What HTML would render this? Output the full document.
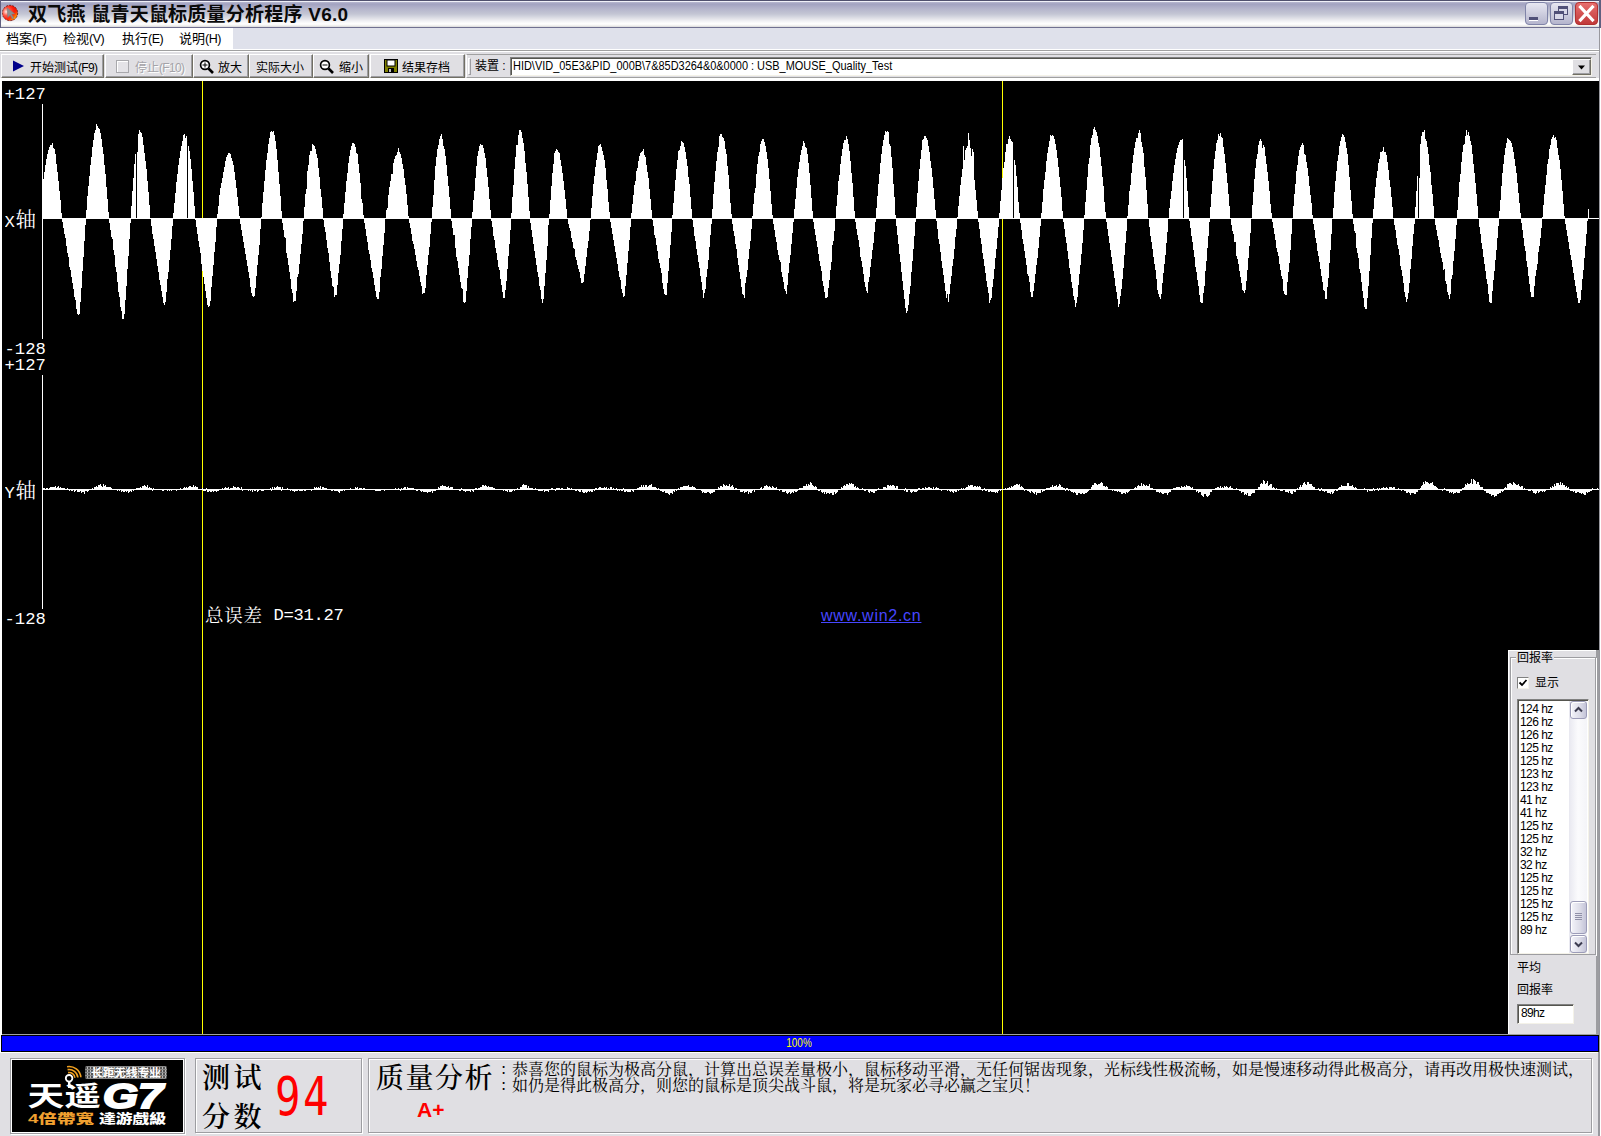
<!DOCTYPE html>
<html lang="zh-CN">
<head>
<meta charset="utf-8">
<title>双飞燕 鼠青天鼠标质量分析程序 V6.0</title>
<style>
*{box-sizing:border-box;margin:0;padding:0}
html,body{width:1601px;height:1136px;overflow:hidden;background:#fff}
body{position:relative;font-family:"Liberation Sans","Noto Sans CJK SC",sans-serif;font-size:12px;color:#000}
.abs{position:absolute}
#titlebar{left:0;top:0;width:1601px;height:28px;
 background:linear-gradient(to bottom,#50506e 0px,#50506e 1px,#f0f0f8 1px,#f0f0f8 2px,#b8b8d0 2px,#a2a2c0 4px,#b2b2ca 8px,#c4c6d4 14px,#d3d5df 16.5px,#e4e4ea 19px,#f6f6f8 22px,#ffffff 24px,#ecebea 26px,#e0e0e0 26.5px,#707090 27px,#707090 28px);}
#title{left:28px;top:2px;height:26px;line-height:26px;font-size:19px;font-weight:bold;white-space:nowrap;letter-spacing:0.23px;color:#0a0a0a}
#menubar{left:0;top:28px;width:1601px;height:21px;background:#dfe1eb}
#menuwhite{left:0;top:28px;width:233px;height:21px;background:#fff}
.menu{top:29px;height:21px;line-height:20px;font-size:13px;white-space:nowrap}
#tbbg{left:0;top:49px;width:1601px;height:32px;background:#e0dfe3}
.hl{left:0;width:1601px;height:1px}
.btn{top:54px;height:24px;background:#e0dfe3;border-top:1px solid #fff;border-left:1px solid #fff;border-right:1px solid #716f64;border-bottom:1px solid #716f64;box-shadow:inset -1px -1px 0 #9d9da1}
.btxt{top:56px;height:24px;line-height:24px;font-size:12px;white-space:nowrap}
#canvas{left:2px;top:81px;width:1597px;height:953px;background:#000;overflow:hidden}
.mono{font-family:"Liberation Mono","Noto Serif CJK SC",monospace;color:#fff;white-space:nowrap}
.lab{font-size:17.2px;line-height:22px;height:22px;overflow:hidden}
.bx{height:20px}
.bx{left:0;width:44px;padding-left:2.5px;background:#000}
.cj{font-family:"Noto Serif CJK SC","Noto Sans CJK SC",serif;font-size:20.5px;line-height:18px;letter-spacing:-1.3px}
#bottom{left:0;top:1053px;width:1601px;height:83px;background:#e0dfe3}
.frame{border:1px solid #9d9da1;box-shadow:inset 1px 1px 0 #fff,1px 1px 0 #fff}
.sbb{border:1px solid #9c9cb8;border-radius:3px;background:linear-gradient(to right,#f4f4fa,#dcdce8 60%,#c4c4d8);box-shadow:inset 1px 1px 0 #fff}
.lt{font-size:12px;letter-spacing:-0.7px}
.ml{font-size:12.5px;letter-spacing:-0.5px}
.song{font-family:"Noto Serif CJK SC","Liberation Serif",serif}
</style>
</head>
<body>
<!-- title bar -->
<div id="titlebar" class="abs"></div>
<svg class="abs" style="left:2px;top:4px" width="18" height="18" viewBox="0 0 18 18">
 <defs><radialGradient id="rb" cx="0.26" cy="0.42" r="0.8"><stop offset="0" stop-color="#fff0ea"/><stop offset="0.3" stop-color="#ff5a48"/><stop offset="0.6" stop-color="#ff1c0c"/><stop offset="1" stop-color="#d81000"/></radialGradient>
 <linearGradient id="yb" x1="0" y1="0" x2="1" y2="1"><stop offset="0.55" stop-color="#ff2000" stop-opacity="0"/><stop offset="0.85" stop-color="#ffb000"/><stop offset="1" stop-color="#ffe000"/></linearGradient></defs>
 <circle cx="8" cy="9" r="7.700" fill="url(#rb)" stroke="#4a1008" stroke-width="0.700" stroke-dasharray="2 1.200"/>
 <circle cx="8" cy="9" r="7.300" fill="url(#yb)"/>
 <path d="M5 3.800l.8 9.700 2.300-2.400 2.200 3.800 1.500-.9-2.200-3.700 3.200-.5z" fill="#8e8e8e" stroke="#787878" stroke-width=".4"/>
</svg>
<div id="title" class="abs">双飞燕 鼠青天鼠标质量分析程序 V6.0</div>
<!-- window buttons -->
<svg class="abs" style="left:1524px;top:1px" width="77" height="26" viewBox="0 0 77 26">
 <defs>
  <linearGradient id="wb" x1="0" y1="0" x2="0" y2="1"><stop offset="0" stop-color="#e8e8f2"/><stop offset="1" stop-color="#b4b4cc"/></linearGradient>
  <linearGradient id="wr" x1="0" y1="0" x2="0" y2="1"><stop offset="0" stop-color="#e87070"/><stop offset="1" stop-color="#c03838"/></linearGradient>
 </defs>
 <rect x="1.500" y="1.500" width="22" height="22" rx="3.500" fill="url(#wb)" stroke="#8084a8"/>
 <rect x="5" y="16" width="9" height="3" fill="#505078"/><rect x="5" y="19" width="9" height="1" fill="#fff"/>
 <rect x="26.500" y="1.500" width="22" height="22" rx="3.500" fill="url(#wb)" stroke="#8084a8"/>
 <rect x="34.500" y="5.500" width="9" height="8" fill="#d8d8e8" stroke="#505078"/><rect x="34" y="5" width="10" height="3" fill="#505078"/>
 <rect x="30.500" y="10.500" width="9" height="8" fill="#d8d8e8" stroke="#505078"/><rect x="30" y="10" width="10" height="3" fill="#505078"/>
 <rect x="51.500" y="1.500" width="22" height="22" rx="3.500" fill="url(#wr)" stroke="#b03030"/>
 <path d="M56.500 6l12 13M68.500 6l-12 13" stroke="#fff" stroke-width="3.200" stroke-linecap="square"/>
</svg>
<!-- menu bar -->
<div id="menubar" class="abs"></div><div id="menuwhite" class="abs"></div>
<div class="abs menu" style="left:6px">档案<span class="ml">(F)</span></div>
<div class="abs menu" style="left:63px">检视<span class="ml">(V)</span></div>
<div class="abs menu" style="left:122px">执行<span class="ml">(E)</span></div>
<div class="abs menu" style="left:179px">说明<span class="ml">(H)</span></div>
<!-- toolbar -->
<div id="tbbg" class="abs"></div>
<div class="abs hl" style="top:49px;background:#fff"></div>
<div class="abs hl" style="top:50px;background:#a0a0a0"></div>
<div class="abs hl" style="top:51px;background:#fff"></div>
<div class="abs hl" style="top:78px;height:3px;background:#fff"></div>
<div class="abs btn" style="left:1px;width:103px"></div>
<div class="abs btn" style="left:105px;width:88px"></div>
<div class="abs btn" style="left:193px;width:56px"></div>
<div class="abs btn" style="left:249px;width:64px"></div>
<div class="abs btn" style="left:313px;width:56px"></div>
<div class="abs btn" style="left:370px;width:95px"></div>
<svg class="abs" style="left:12px;top:59px" width="14" height="14"><path d="M1 1.500L12 7L1 12.500z" fill="#00008b"/></svg>
<div class="abs btxt" style="left:30px">开始测试<span class="lt">(F9)</span></div>
<div class="abs" style="left:116px;top:60px;width:13px;height:13px;border:1px solid #a8a8ac;background:#e4e3e7;box-shadow:inset 1px 1px 0 #fff"></div>
<div class="abs btxt" style="left:135px;color:#a4a3a8;text-shadow:1px 1px 0 #fff">停止<span class="lt">(F10)</span></div>
<svg class="abs" style="left:199px;top:59px" width="16" height="16" viewBox="0 0 16 16"><circle cx="6" cy="6" r="4.400" fill="#fff" stroke="#000" stroke-width="1.700"/><path d="M9.500 9.500L14 14" stroke="#000" stroke-width="2.600"/><path d="M3.500 6h5M6 3.500v5" stroke="#000" stroke-width="1"/></svg>
<div class="abs btxt" style="left:218px">放大</div>
<div class="abs btxt" style="left:256px">实际大小</div>
<svg class="abs" style="left:319px;top:59px" width="16" height="16" viewBox="0 0 16 16"><circle cx="6" cy="6" r="4.400" fill="#fff" stroke="#000" stroke-width="1.700"/><path d="M9.500 9.500L14 14" stroke="#000" stroke-width="2.600"/><path d="M3.500 6h5" stroke="#000" stroke-width="1"/></svg>
<div class="abs btxt" style="left:339px">缩小</div>
<svg class="abs" style="left:384px;top:59px" width="14" height="14" viewBox="0 0 14 14"><rect x="0.500" y="0.500" width="13" height="13" fill="#808000" stroke="#000"/><rect x="3" y="1" width="8" height="6" fill="#fff" stroke="#000" stroke-width="1"/><rect x="4" y="9" width="6" height="4" fill="#000"/><rect x="5" y="10" width="2" height="3" fill="#c0c0c0"/></svg>
<div class="abs btxt" style="left:402px">结果存档</div>
<!-- device band -->
<div class="abs" style="left:466px;top:54px;width:1130px;height:24px;border-top:1px solid #a0a0a0;border-left:1px solid #fff;border-bottom:1px solid #a0a0a0"></div>
<div class="abs" style="left:468px;top:58px;width:3px;height:17px;border-top:1px solid #fff;border-left:1px solid #fff;border-right:1px solid #9d9da1;border-bottom:1px solid #9d9da1"></div>
<div class="abs btxt" style="left:475px;top:54px">装置 :</div>
<div class="abs" style="left:510px;top:57px;width:1082px;height:19px;background:#fff;border-top:1px solid #808080;border-left:1px solid #808080;border-right:1px solid #f4f2e8;border-bottom:1px solid #f4f2e8;box-shadow:inset 1px 1px 0 #55554f"></div>
<div class="abs" id="devtxt" style="left:513px;top:57px;height:19px;line-height:18px;font-size:12.5px;white-space:nowrap;transform-origin:0 0;transform:scaleX(0.876)">HID\VID_05E3&amp;PID_000B\7&amp;85D3264&amp;0&amp;0000 :  USB_MOUSE_Quality_Test</div>
<div class="abs" style="left:1572px;top:59px;width:19px;height:16px;background:#e0dfe3;border-top:1px solid #fff;border-left:1px solid #fff;border-right:1px solid #716f64;border-bottom:1px solid #716f64;box-shadow:inset -1px -1px 0 #9d9da1"></div>
<svg class="abs" style="left:1578px;top:65px" width="8" height="5"><path d="M0 0.500h7L3.500 4.500z" fill="#000"/></svg>
<!-- canvas -->
<div id="canvas" class="abs">
<svg class="abs" style="left:0;top:0" width="1597" height="953" viewBox="0 0 1597 953" shape-rendering="crispEdges">
 <rect x="200" y="0" width="1" height="953" fill="#ffff00"/>
 <rect x="1000" y="0" width="1" height="953" fill="#ffff00"/>
 <rect x="40" y="23" width="1" height="505" fill="#fff"/>
 <rect x="41" y="137" width="1556" height="1" fill="#fff"/>
 <rect x="41" y="408" width="1556" height="1" fill="#fff"/>
 <path fill="#fff" d="M41 98v39h1v-39zM42 91v46h1v-46zM43 84v53h1v-53zM44 78v59h1v-59zM45 73v64h1v-64zM46 69v68h1v-68zM47 66v71h1v-71zM48 64v73h1v-73zM49 64v73h1v-73zM50 62v75h1v-75zM51 67v70h1v-70zM52 68v69h1v-69zM53 73v64h1v-64zM54 83v54h1v-54zM55 91v46h1v-46zM56 100v37h1v-37zM57 110v27h1v-27zM58 119v18h1v-18zM59 132v5h1v-5zM60 137v4h1v-4zM61 137v10h1v-10zM62 137v16h1v-16zM63 137v20h1v-20zM64 137v28h1v-28zM65 137v35h1v-35zM66 137v39h1v-39zM67 137v49h1v-49zM68 137v52h1v-52zM69 137v59h1v-59zM70 137v65h1v-65zM71 137v71h1v-71zM72 137v79h1v-79zM73 137v82h1v-82zM74 137v91h1v-91zM75 137v96h1v-96zM76 137v97h1v-97zM77 137v96h1v-96zM78 137v84h1v-84zM79 137v70h1v-70zM80 137v53h1v-53zM81 137v39h1v-39zM82 137v23h1v-23zM83 137v7h1v-7zM84 129v8h1v-8zM85 115v22h1v-22zM86 105v32h1v-32zM87 95v42h1v-42zM88 84v53h1v-53zM89 76v61h1v-61zM90 66v71h1v-71zM91 59v78h1v-78zM92 52v85h1v-85zM93 49v88h1v-88zM94 43v94h1v-94zM95 45v92h1v-92zM96 47v90h1v-90zM97 48v89h1v-89zM98 52v85h1v-85zM99 58v79h1v-79zM100 66v71h1v-71zM101 73v64h1v-64zM102 84v53h1v-53zM103 93v44h1v-44zM104 106v31h1v-31zM105 118v19h1v-19zM106 131v6h1v-6zM107 137v5h1v-5zM108 137v12h1v-12zM109 137v19h1v-19zM110 137v21h1v-21zM111 137v32h1v-32zM112 137v37h1v-37zM113 137v49h1v-49zM114 137v54h1v-54zM115 137v64h1v-64zM116 137v74h1v-74zM117 137v79h1v-79zM118 137v89h1v-89zM119 137v93h1v-93zM120 137v101h1v-101zM121 137v101h1v-101zM122 137v96h1v-96zM123 137v82h1v-82zM124 137v68h1v-68zM125 137v51h1v-51zM126 137v38h1v-38zM127 137v21h1v-21zM128 137v5h1v-5zM129 125v12h1v-12zM130 110v27h1v-27zM131 97v40h1v-40zM132 83v54h1v-54zM133 73v64h1v-64zM135 71v66h1v-66zM136 53v84h1v-84zM137 49v88h1v-88zM138 51v86h1v-86zM139 52v85h1v-85zM140 56v81h1v-81zM141 64v73h1v-73zM142 72v65h1v-65zM143 80v57h1v-57zM144 88v49h1v-49zM145 100v37h1v-37zM146 111v26h1v-26zM147 124v13h1v-13zM149 137v8h1v-8zM150 137v16h1v-16zM151 137v21h1v-21zM152 137v28h1v-28zM153 137v34h1v-34zM154 137v41h1v-41zM155 137v48h1v-48zM156 137v54h1v-54zM157 137v62h1v-62zM158 137v67h1v-67zM159 137v73h1v-73zM160 137v79h1v-79zM161 137v85h1v-85zM162 137v87h1v-87zM163 137v84h1v-84zM164 137v74h1v-74zM165 137v61h1v-61zM166 137v54h1v-54zM167 137v42h1v-42zM168 137v32h1v-32zM169 137v21h1v-21zM170 137v8h1v-8zM171 132v5h1v-5zM172 122v15h1v-15zM173 112v25h1v-25zM174 101v36h1v-36zM175 93v44h1v-44zM176 84v53h1v-53zM177 77v60h1v-60zM178 70v67h1v-67zM179 65v72h1v-72zM180 60v77h1v-77zM181 54v83h1v-83zM182 53v84h1v-84zM183 57v80h1v-80zM184 55v82h1v-82zM186 65v72h1v-72zM187 70v67h1v-67zM188 78v59h1v-59zM189 88v49h1v-49zM190 100v37h1v-37zM191 111v26h1v-26zM192 125v12h1v-12zM193 137v2h1v-2zM194 137v9h1v-9zM195 137v16h1v-16zM196 137v23h1v-23zM197 137v29h1v-29zM198 137v35h1v-35zM199 137v46h1v-46zM200 137v53h1v-53zM201 137v59h1v-59zM202 137v66h1v-66zM203 137v73h1v-73zM204 137v80h1v-80zM205 137v87h1v-87zM206 137v89h1v-89zM207 137v88h1v-88zM208 137v83h1v-83zM209 137v69h1v-69zM210 137v58h1v-58zM211 137v47h1v-47zM212 137v34h1v-34zM213 137v24h1v-24zM214 137v9h1v-9zM215 133v4h1v-4zM216 125v12h1v-12zM217 114v23h1v-23zM218 107v30h1v-30zM219 102v35h1v-35zM220 97v40h1v-40zM221 91v46h1v-46zM222 86v51h1v-51zM223 80v57h1v-57zM224 76v61h1v-61zM225 74v63h1v-63zM226 72v65h1v-65zM227 72v65h1v-65zM228 73v64h1v-64zM229 77v60h1v-60zM230 80v57h1v-57zM231 84v53h1v-53zM232 91v46h1v-46zM233 99v38h1v-38zM234 107v30h1v-30zM235 116v21h1v-21zM236 125v12h1v-12zM237 135v2h1v-2zM238 137v6h1v-6zM239 137v12h1v-12zM240 137v18h1v-18zM241 137v24h1v-24zM242 137v30h1v-30zM243 137v36h1v-36zM244 137v42h1v-42zM245 137v48h1v-48zM246 137v54h1v-54zM247 137v60h1v-60zM248 137v69h1v-69zM249 137v75h1v-75zM250 137v78h1v-78zM251 137v79h1v-79zM252 137v78h1v-78zM253 137v70h1v-70zM254 137v58h1v-58zM255 137v47h1v-47zM256 137v37h1v-37zM257 137v27h1v-27zM258 137v11h1v-11zM259 136v1h1v-1zM260 122v15h1v-15zM261 111v26h1v-26zM262 100v37h1v-37zM263 89v48h1v-48zM264 79v58h1v-58zM265 72v65h1v-65zM266 63v74h1v-74zM267 57v80h1v-80zM268 51v86h1v-86zM269 50v87h1v-87zM270 51v86h1v-86zM271 50v87h1v-87zM272 54v83h1v-83zM273 60v77h1v-77zM274 68v69h1v-69zM275 79v58h1v-58zM276 91v46h1v-46zM277 103v34h1v-34zM278 115v22h1v-22zM279 130v7h1v-7zM280 137v5h1v-5zM281 137v12h1v-12zM282 137v19h1v-19zM283 137v20h1v-20zM284 137v35h1v-35zM285 137v40h1v-40zM286 137v47h1v-47zM287 137v54h1v-54zM288 137v61h1v-61zM289 137v71h1v-71zM290 137v75h1v-75zM291 137v84h1v-84zM292 137v83h1v-83zM293 137v83h1v-83zM294 137v73h1v-73zM295 137v59h1v-59zM296 137v56h1v-56zM297 137v46h1v-46zM298 137v36h1v-36zM299 137v26h1v-26zM300 137v16h1v-16zM301 137v3h1v-3zM302 126v11h1v-11zM303 113v24h1v-24zM304 108v29h1v-29zM305 90v47h1v-47zM306 84v53h1v-53zM307 74v63h1v-63zM308 70v67h1v-67zM309 70v67h1v-67zM310 63v74h1v-74zM311 64v73h1v-73zM312 65v72h1v-72zM313 68v69h1v-69zM314 73v64h1v-64zM315 77v60h1v-60zM316 87v50h1v-50zM317 96v41h1v-41zM318 108v29h1v-29zM319 116v21h1v-21zM320 127v10h1v-10zM321 137v2h1v-2zM322 137v9h1v-9zM323 137v14h1v-14zM324 137v22h1v-22zM325 137v30h1v-30zM326 137v35h1v-35zM327 137v44h1v-44zM328 137v53h1v-53zM329 137v60h1v-60zM330 137v68h1v-68zM331 137v69h1v-69zM332 137v79h1v-79zM333 137v77h1v-77zM334 137v77h1v-77zM335 137v67h1v-67zM336 137v55h1v-55zM337 137v46h1v-46zM338 137v37h1v-37zM339 137v23h1v-23zM340 137v11h1v-11zM341 133v4h1v-4zM342 122v15h1v-15zM343 111v26h1v-26zM344 100v37h1v-37zM345 92v45h1v-45zM346 82v55h1v-55zM347 75v62h1v-62zM348 69v68h1v-68zM349 65v72h1v-72zM350 62v75h1v-75zM351 62v75h1v-75zM352 63v74h1v-74zM353 66v71h1v-71zM354 72v65h1v-65zM355 73v64h1v-64zM356 83v54h1v-54zM357 92v45h1v-45zM358 102v35h1v-35zM359 118v19h1v-19zM360 122v15h1v-15zM361 134v3h1v-3zM362 137v5h1v-5zM363 137v11h1v-11zM364 137v18h1v-18zM365 137v24h1v-24zM366 137v32h1v-32zM367 137v36h1v-36zM368 137v42h1v-42zM369 137v50h1v-50zM370 137v54h1v-54zM371 137v60h1v-60zM372 137v67h1v-67zM373 137v73h1v-73zM374 137v79h1v-79zM375 137v81h1v-81zM376 137v81h1v-81zM377 137v74h1v-74zM378 137v59h1v-59zM379 137v51h1v-51zM380 137v38h1v-38zM381 137v27h1v-27zM382 137v15h1v-15zM384 129v8h1v-8zM385 127v10h1v-10zM386 114v23h1v-23zM387 106v31h1v-31zM388 100v37h1v-37zM389 93v44h1v-44zM390 93v44h1v-44zM391 82v55h1v-55zM392 78v59h1v-59zM393 75v62h1v-62zM394 74v63h1v-63zM395 71v66h1v-66zM396 67v70h1v-70zM397 71v66h1v-66zM398 73v64h1v-64zM399 77v60h1v-60zM400 83v54h1v-54zM401 88v49h1v-49zM402 97v40h1v-40zM403 104v33h1v-33zM404 113v24h1v-24zM405 124v13h1v-13zM406 135v2h1v-2zM407 137v5h1v-5zM408 137v10h1v-10zM409 137v16h1v-16zM410 137v23h1v-23zM411 137v26h1v-26zM412 137v31h1v-31zM413 137v37h1v-37zM414 137v43h1v-43zM415 137v49h1v-49zM416 137v52h1v-52zM417 137v58h1v-58zM418 137v64h1v-64zM419 137v68h1v-68zM420 137v76h1v-76zM421 137v75h1v-75zM422 137v75h1v-75zM423 137v70h1v-70zM424 137v57h1v-57zM425 137v47h1v-47zM426 137v37h1v-37zM427 137v29h1v-29zM428 137v16h1v-16zM429 137v4h1v-4zM430 126v11h1v-11zM431 114v23h1v-23zM432 99v38h1v-38zM433 85v52h1v-52zM434 76v61h1v-61zM435 68v69h1v-69zM436 64v73h1v-73zM437 58v79h1v-79zM438 55v82h1v-82zM439 53v84h1v-84zM440 58v79h1v-79zM441 65v72h1v-72zM442 68v69h1v-69zM443 75v62h1v-62zM444 84v53h1v-53zM445 95v42h1v-42zM446 105v32h1v-32zM447 116v21h1v-21zM448 128v9h1v-9zM449 137v3h1v-3zM450 137v10h1v-10zM451 137v17h1v-17zM452 137v17h1v-17zM453 137v30h1v-30zM454 137v39h1v-39zM455 137v43h1v-43zM456 137v50h1v-50zM457 137v57h1v-57zM458 137v64h1v-64zM459 137v70h1v-70zM460 137v71h1v-71zM461 137v84h1v-84zM462 137v85h1v-85zM463 137v84h1v-84zM464 137v73h1v-73zM465 137v60h1v-60zM466 137v48h1v-48zM467 137v37h1v-37zM468 137v21h1v-21zM469 137v9h1v-9zM470 131v6h1v-6zM471 119v18h1v-18zM472 110v27h1v-27zM473 97v40h1v-40zM474 85v52h1v-52zM475 75v62h1v-62zM476 70v67h1v-67zM477 65v72h1v-72zM478 63v74h1v-74zM479 64v73h1v-73zM480 64v73h1v-73zM481 67v70h1v-70zM482 72v65h1v-65zM483 77v60h1v-60zM484 87v50h1v-50zM485 96v41h1v-41zM486 106v31h1v-31zM487 118v19h1v-19zM488 129v8h1v-8zM489 137v3h1v-3zM490 137v9h1v-9zM491 137v18h1v-18zM492 137v22h1v-22zM493 137v30h1v-30zM494 137v35h1v-35zM495 137v42h1v-42zM496 137v49h1v-49zM497 137v52h1v-52zM498 137v61h1v-61zM499 137v67h1v-67zM500 137v74h1v-74zM501 137v80h1v-80zM502 137v80h1v-80zM503 137v72h1v-72zM504 137v63h1v-63zM505 137v51h1v-51zM506 137v38h1v-38zM507 137v26h1v-26zM508 137v12h1v-12zM509 132v5h1v-5zM510 116v21h1v-21zM511 104v33h1v-33zM512 88v49h1v-49zM513 76v61h1v-61zM514 64v73h1v-73zM515 64v73h1v-73zM516 54v83h1v-83zM517 49v88h1v-88zM518 49v88h1v-88zM519 51v86h1v-86zM520 57v80h1v-80zM521 62v75h1v-75zM522 70v67h1v-67zM523 82v55h1v-55zM524 91v46h1v-46zM525 103v34h1v-34zM526 116v21h1v-21zM527 130v7h1v-7zM528 137v5h1v-5zM529 137v12h1v-12zM530 137v19h1v-19zM531 137v26h1v-26zM532 137v33h1v-33zM533 137v40h1v-40zM534 137v47h1v-47zM535 137v54h1v-54zM536 137v59h1v-59zM537 137v68h1v-68zM538 137v72h1v-72zM539 137v81h1v-81zM540 137v85h1v-85zM541 137v81h1v-81zM542 137v68h1v-68zM543 137v55h1v-55zM544 137v42h1v-42zM545 137v28h1v-28zM546 137v7h1v-7zM547 133v4h1v-4zM548 119v18h1v-18zM549 105v32h1v-32zM550 92v45h1v-45zM551 83v54h1v-54zM552 72v65h1v-65zM553 70v67h1v-67zM554 68v69h1v-69zM555 69v68h1v-68zM556 71v66h1v-66zM557 72v65h1v-65zM558 79v58h1v-58zM559 85v52h1v-52zM560 92v45h1v-45zM561 100v37h1v-37zM562 109v28h1v-28zM563 118v19h1v-19zM564 128v9h1v-9zM566 137v6h1v-6zM567 137v10h1v-10zM568 137v13h1v-13zM569 137v20h1v-20zM570 137v24h1v-24zM571 137v30h1v-30zM572 137v31h1v-31zM573 137v39h1v-39zM574 137v42h1v-42zM575 137v47h1v-47zM576 137v51h1v-51zM577 137v54h1v-54zM578 137v60h1v-60zM579 137v65h1v-65zM580 137v65h1v-65zM581 137v64h1v-64zM582 137v56h1v-56zM583 137v48h1v-48zM584 137v39h1v-39zM585 137v30h1v-30zM586 137v23h1v-23zM587 137v13h1v-13zM588 137v2h1v-2zM589 127v10h1v-10zM590 115v22h1v-22zM591 103v34h1v-34zM592 95v42h1v-42zM593 86v51h1v-51zM594 79v58h1v-58zM595 72v65h1v-65zM596 65v72h1v-72zM597 64v73h1v-73zM598 63v74h1v-74zM599 66v71h1v-71zM600 70v67h1v-67zM601 74v63h1v-63zM602 79v58h1v-58zM603 87v50h1v-50zM604 99v38h1v-38zM605 108v29h1v-29zM606 121v16h1v-16zM607 131v6h1v-6zM608 137v4h1v-4zM609 137v10h1v-10zM610 137v16h1v-16zM611 137v22h1v-22zM612 137v28h1v-28zM613 137v34h1v-34zM614 137v40h1v-40zM615 137v46h1v-46zM616 137v53h1v-53zM617 137v59h1v-59zM618 137v62h1v-62zM619 137v71h1v-71zM620 137v75h1v-75zM621 137v79h1v-79zM622 137v78h1v-78zM623 137v68h1v-68zM624 137v57h1v-57zM625 137v45h1v-45zM626 137v33h1v-33zM627 137v22h1v-22zM628 137v9h1v-9zM629 132v5h1v-5zM630 123v14h1v-14zM631 114v23h1v-23zM632 104v33h1v-33zM633 100v37h1v-37zM634 90v47h1v-47zM635 87v50h1v-50zM636 80v57h1v-57zM637 75v62h1v-62zM638 72v65h1v-65zM639 71v66h1v-66zM640 70v67h1v-67zM641 68v69h1v-69zM642 74v63h1v-63zM643 76v61h1v-61zM644 84v53h1v-53zM645 91v46h1v-46zM646 97v40h1v-40zM647 108v29h1v-29zM648 118v19h1v-19zM649 129v8h1v-8zM650 137v2h1v-2zM651 137v8h1v-8zM652 137v17h1v-17zM653 137v20h1v-20zM654 137v27h1v-27zM655 137v33h1v-33zM656 137v41h1v-41zM657 137v45h1v-45zM658 137v50h1v-50zM659 137v55h1v-55zM660 137v65h1v-65zM661 137v71h1v-71zM662 137v76h1v-76zM663 137v77h1v-77zM664 137v77h1v-77zM665 137v65h1v-65zM666 137v53h1v-53zM667 137v40h1v-40zM668 137v27h1v-27zM669 137v14h1v-14zM670 134v3h1v-3zM671 122v15h1v-15zM672 110v27h1v-27zM673 99v38h1v-38zM674 88v49h1v-49zM675 79v58h1v-58zM676 70v67h1v-67zM677 69v68h1v-68zM678 65v72h1v-72zM679 60v77h1v-77zM680 61v76h1v-76zM681 62v75h1v-75zM682 66v71h1v-71zM683 71v66h1v-66zM684 78v59h1v-59zM685 85v52h1v-52zM686 96v41h1v-41zM687 103v34h1v-34zM688 116v21h1v-21zM689 128v9h1v-9zM690 137v2h1v-2zM691 137v9h1v-9zM692 137v18h1v-18zM693 137v23h1v-23zM694 137v31h1v-31zM695 137v37h1v-37zM696 137v44h1v-44zM697 137v50h1v-50zM698 137v58h1v-58zM699 137v64h1v-64zM700 137v72h1v-72zM701 137v80h1v-80zM702 137v75h1v-75zM703 137v71h1v-71zM704 137v59h1v-59zM705 137v51h1v-51zM706 137v42h1v-42zM707 137v29h1v-29zM708 137v17h1v-17zM709 137v6h1v-6zM710 128v9h1v-9zM711 113v24h1v-24zM712 101v36h1v-36zM713 90v47h1v-47zM714 80v57h1v-57zM715 71v66h1v-66zM716 66v71h1v-71zM717 55v82h1v-82zM718 53v84h1v-84zM719 53v84h1v-84zM720 56v81h1v-81zM721 57v80h1v-80zM722 60v77h1v-77zM723 68v69h1v-69zM724 73v64h1v-64zM725 85v52h1v-52zM726 94v43h1v-43zM727 108v29h1v-29zM728 122v15h1v-15zM729 133v4h1v-4zM730 137v6h1v-6zM731 137v13h1v-13zM732 137v18h1v-18zM733 137v26h1v-26zM734 137v31h1v-31zM735 137v40h1v-40zM736 137v47h1v-47zM737 137v54h1v-54zM738 137v61h1v-61zM739 137v69h1v-69zM740 137v76h1v-76zM741 137v77h1v-77zM742 137v80h1v-80zM743 137v65h1v-65zM744 137v59h1v-59zM745 137v52h1v-52zM746 137v41h1v-41zM747 137v31h1v-31zM748 137v23h1v-23zM749 137v11h1v-11zM750 135v2h1v-2zM751 123v14h1v-14zM752 112v25h1v-25zM753 107v30h1v-30zM754 93v44h1v-44zM755 83v54h1v-54zM756 75v62h1v-62zM757 71v66h1v-66zM758 63v74h1v-74zM759 60v77h1v-77zM760 58v79h1v-79zM761 58v79h1v-79zM762 61v76h1v-76zM763 65v72h1v-72zM764 71v66h1v-66zM765 78v59h1v-59zM766 87v50h1v-50zM767 98v39h1v-39zM768 110v27h1v-27zM769 123v14h1v-14zM770 134v3h1v-3zM771 137v6h1v-6zM772 137v12h1v-12zM773 137v19h1v-19zM774 137v24h1v-24zM775 137v32h1v-32zM776 137v37h1v-37zM777 137v42h1v-42zM778 137v44h1v-44zM779 137v54h1v-54zM780 137v59h1v-59zM781 137v64h1v-64zM782 137v71h1v-71zM783 137v73h1v-73zM784 137v76h1v-76zM785 137v67h1v-67zM786 137v55h1v-55zM787 137v45h1v-45zM788 137v37h1v-37zM789 137v26h1v-26zM790 137v15h1v-15zM791 137v4h1v-4zM792 128v9h1v-9zM793 118v19h1v-19zM794 107v30h1v-30zM795 96v41h1v-41zM796 88v49h1v-49zM797 81v56h1v-56zM798 74v63h1v-63zM799 69v68h1v-68zM800 65v72h1v-72zM801 60v77h1v-77zM802 62v75h1v-75zM803 66v71h1v-71zM804 67v70h1v-70zM805 73v64h1v-64zM806 82v55h1v-55zM807 92v45h1v-45zM808 104v33h1v-33zM809 117v20h1v-20zM810 130v7h1v-7zM811 137v4h1v-4zM812 137v11h1v-11zM813 137v17h1v-17zM814 137v23h1v-23zM815 137v29h1v-29zM816 137v36h1v-36zM817 137v43h1v-43zM818 137v48h1v-48zM819 137v53h1v-53zM820 137v63h1v-63zM821 137v68h1v-68zM822 137v74h1v-74zM823 137v80h1v-80zM824 137v80h1v-80zM825 137v79h1v-79zM826 137v70h1v-70zM827 137v62h1v-62zM828 137v52h1v-52zM829 137v44h1v-44zM830 137v27h1v-27zM831 137v23h1v-23zM832 137v13h1v-13zM834 125v12h1v-12zM835 114v23h1v-23zM836 100v37h1v-37zM837 94v43h1v-43zM838 83v54h1v-54zM839 75v62h1v-62zM840 68v69h1v-69zM841 62v75h1v-75zM842 59v78h1v-78zM843 59v78h1v-78zM844 55v82h1v-82zM845 58v79h1v-79zM846 63v74h1v-74zM847 70v67h1v-67zM848 80v57h1v-57zM849 92v45h1v-45zM850 102v35h1v-35zM851 116v21h1v-21zM852 130v7h1v-7zM853 137v4h1v-4zM854 137v11h1v-11zM855 137v17h1v-17zM856 137v22h1v-22zM857 137v29h1v-29zM858 137v39h1v-39zM859 137v43h1v-43zM860 137v49h1v-49zM861 137v56h1v-56zM862 137v64h1v-64zM863 137v69h1v-69zM864 137v73h1v-73zM865 137v75h1v-75zM866 137v64h1v-64zM867 137v59h1v-59zM868 137v49h1v-49zM869 137v41h1v-41zM870 137v32h1v-32zM871 137v25h1v-25zM872 137v14h1v-14zM873 137v4h1v-4zM874 127v10h1v-10zM875 115v22h1v-22zM876 103v34h1v-34zM877 93v44h1v-44zM878 82v55h1v-55zM879 73v64h1v-64zM880 65v72h1v-72zM881 59v78h1v-78zM882 54v83h1v-83zM883 50v87h1v-87zM884 51v86h1v-86zM885 50v87h1v-87zM886 51v86h1v-86zM887 63v74h1v-74zM888 65v72h1v-72zM889 76v61h1v-61zM890 87v50h1v-50zM891 103v34h1v-34zM892 116v21h1v-21zM893 134v3h1v-3zM894 137v8h1v-8zM895 137v17h1v-17zM896 137v26h1v-26zM897 137v36h1v-36zM898 137v44h1v-44zM899 137v54h1v-54zM900 137v63h1v-63zM901 137v72h1v-72zM902 137v81h1v-81zM903 137v90h1v-90zM904 137v95h1v-95zM905 137v93h1v-93zM906 137v87h1v-87zM907 137v76h1v-76zM908 137v68h1v-68zM909 137v54h1v-54zM910 137v43h1v-43zM911 137v31h1v-31zM912 137v18h1v-18zM913 137v4h1v-4zM914 126v11h1v-11zM915 112v25h1v-25zM916 100v37h1v-37zM917 88v49h1v-49zM918 78v59h1v-59zM919 69v68h1v-68zM920 59v78h1v-78zM921 58v79h1v-79zM922 55v82h1v-82zM923 55v82h1v-82zM924 57v80h1v-80zM925 59v78h1v-78zM926 65v72h1v-72zM927 71v66h1v-66zM928 80v57h1v-57zM929 87v50h1v-50zM930 96v41h1v-41zM931 107v30h1v-30zM932 118v19h1v-19zM933 129v8h1v-8zM934 137v3h1v-3zM935 137v11h1v-11zM936 137v21h1v-21zM937 137v26h1v-26zM938 137v34h1v-34zM939 137v43h1v-43zM940 137v50h1v-50zM941 137v57h1v-57zM942 137v65h1v-65zM943 137v73h1v-73zM944 137v80h1v-80zM945 137v76h1v-76zM946 137v84h1v-84zM947 137v76h1v-76zM948 137v66h1v-66zM949 137v58h1v-58zM950 137v48h1v-48zM951 137v41h1v-41zM952 137v31h1v-31zM953 137v19h1v-19zM954 137v11h1v-11zM955 136v1h1v-1zM956 125v12h1v-12zM957 115v22h1v-22zM958 104v33h1v-33zM959 96v41h1v-41zM960 88v49h1v-49zM961 65v72h1v-72zM962 79v58h1v-58zM963 69v68h1v-68zM964 67v70h1v-70zM965 65v72h1v-72zM966 52v85h1v-85zM967 59v78h1v-78zM968 67v70h1v-70zM969 75v62h1v-62zM970 68v69h1v-69zM971 71v66h1v-66zM972 99v38h1v-38zM973 109v28h1v-28zM974 119v18h1v-18zM975 130v7h1v-7zM976 137v4h1v-4zM977 137v11h1v-11zM978 137v20h1v-20zM979 137v26h1v-26zM980 137v35h1v-35zM981 137v41h1v-41zM982 137v48h1v-48zM983 137v55h1v-55zM984 137v63h1v-63zM985 137v69h1v-69zM986 137v75h1v-75zM987 137v85h1v-85zM988 137v82h1v-82zM989 137v80h1v-80zM990 137v69h1v-69zM991 137v61h1v-61zM992 137v51h1v-51zM993 137v40h1v-40zM994 137v31h1v-31zM995 137v20h1v-20zM996 137v9h1v-9zM997 132v5h1v-5zM998 120v17h1v-17zM999 109v28h1v-28zM1000 97v40h1v-40zM1001 87v50h1v-50zM1002 81v56h1v-56zM1003 71v66h1v-66zM1004 63v74h1v-74zM1005 63v74h1v-74zM1006 58v79h1v-79zM1007 55v82h1v-82zM1008 58v79h1v-79zM1009 60v77h1v-77zM1010 61v76h1v-76zM1012 79v58h1v-58zM1013 84v53h1v-53zM1014 95v42h1v-42zM1015 106v31h1v-31zM1016 121v16h1v-16zM1017 132v5h1v-5zM1018 137v5h1v-5zM1019 137v12h1v-12zM1020 137v21h1v-21zM1021 137v26h1v-26zM1022 137v33h1v-33zM1023 137v40h1v-40zM1024 137v47h1v-47zM1025 137v56h1v-56zM1026 137v58h1v-58zM1027 137v64h1v-64zM1028 137v74h1v-74zM1029 137v79h1v-79zM1030 137v79h1v-79zM1031 137v73h1v-73zM1032 137v65h1v-65zM1033 137v56h1v-56zM1034 137v47h1v-47zM1035 137v40h1v-40zM1036 137v30h1v-30zM1037 137v19h1v-19zM1038 137v8h1v-8zM1039 132v5h1v-5zM1040 121v16h1v-16zM1041 108v29h1v-29zM1042 99v38h1v-38zM1043 91v46h1v-46zM1044 80v57h1v-57zM1045 72v65h1v-65zM1046 66v71h1v-71zM1047 60v77h1v-77zM1048 54v83h1v-83zM1049 55v82h1v-82zM1050 54v83h1v-83zM1051 55v82h1v-82zM1052 58v79h1v-79zM1053 63v74h1v-74zM1054 69v68h1v-68zM1055 77v60h1v-60zM1056 86v51h1v-51zM1057 96v41h1v-41zM1058 106v31h1v-31zM1059 116v21h1v-21zM1060 130v7h1v-7zM1061 137v4h1v-4zM1062 137v11h1v-11zM1063 137v19h1v-19zM1064 137v25h1v-25zM1065 137v33h1v-33zM1066 137v41h1v-41zM1067 137v50h1v-50zM1068 137v56h1v-56zM1069 137v64h1v-64zM1070 137v70h1v-70zM1071 137v78h1v-78zM1072 137v82h1v-82zM1073 137v89h1v-89zM1074 137v85h1v-85zM1075 137v79h1v-79zM1076 137v67h1v-67zM1077 137v56h1v-56zM1078 137v47h1v-47zM1079 137v36h1v-36zM1080 137v25h1v-25zM1081 137v12h1v-12zM1082 134v3h1v-3zM1083 121v16h1v-16zM1084 109v28h1v-28zM1085 96v41h1v-41zM1086 83v54h1v-54zM1087 77v60h1v-60zM1088 64v73h1v-73zM1089 57v80h1v-80zM1090 54v83h1v-83zM1091 48v89h1v-89zM1092 46v91h1v-91zM1093 49v88h1v-88zM1094 51v86h1v-86zM1095 55v82h1v-82zM1096 62v75h1v-75zM1097 66v71h1v-71zM1098 76v61h1v-61zM1099 85v52h1v-52zM1100 96v41h1v-41zM1101 105v32h1v-32zM1102 121v16h1v-16zM1103 131v6h1v-6zM1104 137v4h1v-4zM1105 137v11h1v-11zM1106 137v18h1v-18zM1107 137v25h1v-25zM1108 137v32h1v-32zM1109 137v39h1v-39zM1110 137v46h1v-46zM1111 137v53h1v-53zM1112 137v60h1v-60zM1113 137v68h1v-68zM1114 137v74h1v-74zM1115 137v81h1v-81zM1116 137v89h1v-89zM1117 137v86h1v-86zM1118 137v78h1v-78zM1119 137v71h1v-71zM1120 137v61h1v-61zM1121 137v50h1v-50zM1122 137v37h1v-37zM1123 137v25h1v-25zM1124 137v13h1v-13zM1125 135v2h1v-2zM1126 124v13h1v-13zM1127 110v27h1v-27zM1128 104v33h1v-33zM1129 92v45h1v-45zM1130 82v55h1v-55zM1131 74v63h1v-63zM1132 67v70h1v-70zM1133 61v76h1v-76zM1134 57v80h1v-80zM1135 57v80h1v-80zM1136 52v85h1v-85zM1137 49v88h1v-88zM1138 52v85h1v-85zM1139 61v76h1v-76zM1140 66v71h1v-71zM1141 72v65h1v-65zM1142 86v51h1v-51zM1143 96v41h1v-41zM1144 109v28h1v-28zM1145 123v14h1v-14zM1147 137v9h1v-9zM1148 137v18h1v-18zM1149 137v24h1v-24zM1150 137v31h1v-31zM1151 137v39h1v-39zM1152 137v46h1v-46zM1153 137v52h1v-52zM1154 137v61h1v-61zM1155 137v72h1v-72zM1156 137v76h1v-76zM1157 137v79h1v-79zM1158 137v81h1v-81zM1159 137v76h1v-76zM1160 137v65h1v-65zM1161 137v55h1v-55zM1162 137v46h1v-46zM1163 137v37h1v-37zM1164 137v25h1v-25zM1165 137v14h1v-14zM1167 127v10h1v-10zM1168 118v19h1v-19zM1169 110v27h1v-27zM1170 100v37h1v-37zM1171 92v45h1v-45zM1172 84v53h1v-53zM1173 78v59h1v-59zM1174 72v65h1v-65zM1175 67v70h1v-70zM1176 64v73h1v-73zM1177 61v76h1v-76zM1178 59v78h1v-78zM1179 59v78h1v-78zM1180 58v79h1v-79zM1182 79v58h1v-58zM1183 85v52h1v-52zM1184 97v40h1v-40zM1185 110v27h1v-27zM1186 126v11h1v-11zM1187 137v3h1v-3zM1188 137v10h1v-10zM1189 137v18h1v-18zM1190 137v24h1v-24zM1191 137v32h1v-32zM1192 137v39h1v-39zM1193 137v49h1v-49zM1194 137v54h1v-54zM1195 137v62h1v-62zM1196 137v68h1v-68zM1197 137v77h1v-77zM1198 137v84h1v-84zM1199 137v85h1v-85zM1200 137v85h1v-85zM1201 137v75h1v-75zM1202 137v68h1v-68zM1203 137v53h1v-53zM1204 137v43h1v-43zM1205 137v30h1v-30zM1206 137v18h1v-18zM1207 137v4h1v-4zM1208 126v11h1v-11zM1209 113v24h1v-24zM1210 100v37h1v-37zM1211 88v49h1v-49zM1212 78v59h1v-59zM1213 70v67h1v-67zM1214 62v75h1v-75zM1215 59v78h1v-78zM1216 53v84h1v-84zM1217 55v82h1v-82zM1218 52v85h1v-85zM1219 56v81h1v-81zM1220 57v80h1v-80zM1221 66v71h1v-71zM1222 73v64h1v-64zM1223 82v55h1v-55zM1224 92v45h1v-45zM1225 102v35h1v-35zM1226 113v24h1v-24zM1227 125v12h1v-12zM1229 137v7h1v-7zM1230 137v13h1v-13zM1231 137v16h1v-16zM1232 137v24h1v-24zM1233 137v24h1v-24zM1234 137v38h1v-38zM1235 137v41h1v-41zM1236 137v46h1v-46zM1237 137v53h1v-53zM1238 137v59h1v-59zM1239 137v65h1v-65zM1240 137v72h1v-72zM1241 137v73h1v-73zM1242 137v75h1v-75zM1243 137v72h1v-72zM1244 137v63h1v-63zM1245 137v52h1v-52zM1246 137v40h1v-40zM1247 137v28h1v-28zM1248 137v15h1v-15zM1250 124v13h1v-13zM1251 111v26h1v-26zM1252 98v39h1v-39zM1253 87v50h1v-50zM1254 78v59h1v-59zM1255 73v64h1v-64zM1256 64v73h1v-73zM1257 60v77h1v-77zM1258 58v79h1v-79zM1259 60v77h1v-77zM1260 67v70h1v-70zM1261 64v73h1v-73zM1262 66v71h1v-71zM1263 75v62h1v-62zM1264 83v54h1v-54zM1265 91v46h1v-46zM1266 100v37h1v-37zM1267 110v27h1v-27zM1268 123v14h1v-14zM1269 132v5h1v-5zM1270 137v4h1v-4zM1271 137v10h1v-10zM1272 137v16h1v-16zM1273 137v22h1v-22zM1274 137v30h1v-30zM1275 137v34h1v-34zM1276 137v38h1v-38zM1277 137v46h1v-46zM1278 137v52h1v-52zM1279 137v58h1v-58zM1280 137v61h1v-61zM1281 137v73h1v-73zM1282 137v76h1v-76zM1283 137v77h1v-77zM1284 137v77h1v-77zM1285 137v64h1v-64zM1286 137v54h1v-54zM1287 137v45h1v-45zM1288 137v32h1v-32zM1289 137v16h1v-16zM1291 125v12h1v-12zM1292 113v24h1v-24zM1293 103v34h1v-34zM1294 90v47h1v-47zM1295 84v53h1v-53zM1296 75v62h1v-62zM1297 69v68h1v-68zM1298 66v71h1v-71zM1299 64v73h1v-73zM1300 62v75h1v-75zM1301 64v73h1v-73zM1302 73v64h1v-64zM1303 74v63h1v-63zM1304 81v56h1v-56zM1305 87v50h1v-50zM1306 95v42h1v-42zM1307 105v32h1v-32zM1308 114v23h1v-23zM1309 122v15h1v-15zM1310 134v3h1v-3zM1311 137v6h1v-6zM1312 137v12h1v-12zM1313 137v20h1v-20zM1314 137v25h1v-25zM1315 137v33h1v-33zM1316 137v38h1v-38zM1317 137v44h1v-44zM1318 137v51h1v-51zM1319 137v58h1v-58zM1320 137v64h1v-64zM1321 137v72h1v-72zM1322 137v73h1v-73zM1323 137v81h1v-81zM1324 137v81h1v-81zM1325 137v69h1v-69zM1326 137v60h1v-60zM1327 137v45h1v-45zM1328 137v32h1v-32zM1329 137v16h1v-16zM1331 127v10h1v-10zM1332 111v26h1v-26zM1333 100v37h1v-37zM1334 90v47h1v-47zM1335 80v57h1v-57zM1336 74v63h1v-63zM1337 65v72h1v-72zM1338 60v77h1v-77zM1339 56v81h1v-81zM1340 53v84h1v-84zM1341 54v83h1v-83zM1342 56v81h1v-81zM1343 61v76h1v-76zM1344 67v70h1v-70zM1345 73v64h1v-64zM1346 84v53h1v-53zM1347 96v41h1v-41zM1348 109v28h1v-28zM1349 120v17h1v-17zM1350 133v4h1v-4zM1351 137v6h1v-6zM1352 137v13h1v-13zM1353 137v15h1v-15zM1354 137v30h1v-30zM1355 137v35h1v-35zM1356 137v40h1v-40zM1357 137v51h1v-51zM1358 137v55h1v-55zM1359 137v64h1v-64zM1360 137v73h1v-73zM1361 137v80h1v-80zM1362 137v89h1v-89zM1363 137v91h1v-91zM1364 137v91h1v-91zM1365 137v80h1v-80zM1366 137v68h1v-68zM1367 137v53h1v-53zM1368 137v37h1v-37zM1369 137v20h1v-20zM1370 137v5h1v-5zM1371 128v9h1v-9zM1372 117v20h1v-20zM1373 106v31h1v-31zM1374 97v40h1v-40zM1375 90v47h1v-47zM1376 82v55h1v-55zM1377 78v59h1v-59zM1378 71v66h1v-66zM1379 71v66h1v-66zM1380 70v67h1v-67zM1381 66v71h1v-71zM1382 71v66h1v-66zM1383 71v66h1v-66zM1384 74v63h1v-63zM1385 81v56h1v-56zM1386 89v48h1v-48zM1387 99v38h1v-38zM1388 106v31h1v-31zM1389 116v21h1v-21zM1390 126v11h1v-11zM1392 137v7h1v-7zM1393 137v12h1v-12zM1394 137v20h1v-20zM1395 137v27h1v-27zM1396 137v31h1v-31zM1397 137v37h1v-37zM1398 137v48h1v-48zM1399 137v52h1v-52zM1400 137v58h1v-58zM1401 137v65h1v-65zM1402 137v74h1v-74zM1403 137v79h1v-79zM1404 137v84h1v-84zM1405 137v81h1v-81zM1406 137v75h1v-75zM1407 137v65h1v-65zM1408 137v51h1v-51zM1409 137v41h1v-41zM1410 137v28h1v-28zM1411 137v16h1v-16zM1412 137v6h1v-6zM1413 126v11h1v-11zM1414 110v27h1v-27zM1415 95v42h1v-42zM1417 97v40h1v-40zM1418 63v74h1v-74zM1419 55v82h1v-82zM1420 51v86h1v-86zM1421 51v86h1v-86zM1422 49v88h1v-88zM1423 58v79h1v-79zM1424 60v77h1v-77zM1425 66v71h1v-71zM1426 73v64h1v-64zM1427 84v53h1v-53zM1428 91v46h1v-46zM1429 104v33h1v-33zM1430 113v24h1v-24zM1431 125v12h1v-12zM1433 137v7h1v-7zM1434 137v12h1v-12zM1435 137v18h1v-18zM1436 137v22h1v-22zM1437 137v29h1v-29zM1438 137v35h1v-35zM1439 137v40h1v-40zM1440 137v44h1v-44zM1441 137v52h1v-52zM1442 137v51h1v-51zM1443 137v63h1v-63zM1444 137v66h1v-66zM1445 137v74h1v-74zM1446 137v77h1v-77zM1447 137v81h1v-81zM1448 137v76h1v-76zM1449 137v61h1v-61zM1450 137v57h1v-57zM1451 137v43h1v-43zM1452 137v33h1v-33zM1453 137v21h1v-21zM1454 137v7h1v-7zM1455 129v8h1v-8zM1456 116v21h1v-21zM1457 101v36h1v-36zM1458 93v44h1v-44zM1459 81v56h1v-56zM1460 71v66h1v-66zM1461 64v73h1v-73zM1462 63v74h1v-74zM1463 55v82h1v-82zM1464 49v88h1v-88zM1465 54v83h1v-83zM1466 51v86h1v-86zM1467 55v82h1v-82zM1468 60v77h1v-77zM1469 64v73h1v-73zM1470 73v64h1v-64zM1471 83v54h1v-54zM1472 92v45h1v-45zM1473 102v35h1v-35zM1474 113v24h1v-24zM1475 125v12h1v-12zM1477 137v9h1v-9zM1478 137v16h1v-16zM1479 137v25h1v-25zM1480 137v31h1v-31zM1481 137v39h1v-39zM1482 137v46h1v-46zM1483 137v53h1v-53zM1484 137v61h1v-61zM1485 137v66h1v-66zM1486 137v76h1v-76zM1487 137v84h1v-84zM1488 137v85h1v-85zM1489 137v85h1v-85zM1490 137v73h1v-73zM1491 137v62h1v-62zM1492 137v53h1v-53zM1493 137v42h1v-42zM1494 137v32h1v-32zM1495 137v20h1v-20zM1496 137v8h1v-8zM1497 130v7h1v-7zM1498 119v18h1v-18zM1499 105v32h1v-32zM1500 92v45h1v-45zM1501 83v54h1v-54zM1502 74v63h1v-63zM1503 67v70h1v-70zM1504 62v75h1v-75zM1505 57v80h1v-80zM1506 58v79h1v-79zM1507 59v78h1v-78zM1508 60v77h1v-77zM1509 62v75h1v-75zM1510 66v71h1v-71zM1511 71v66h1v-66zM1512 78v59h1v-59zM1513 85v52h1v-52zM1514 92v45h1v-45zM1515 102v35h1v-35zM1516 112v25h1v-25zM1517 122v15h1v-15zM1518 132v5h1v-5zM1519 137v5h1v-5zM1520 137v12h1v-12zM1521 137v20h1v-20zM1522 137v28h1v-28zM1523 137v33h1v-33zM1524 137v43h1v-43zM1525 137v49h1v-49zM1526 137v58h1v-58zM1527 137v66h1v-66zM1528 137v74h1v-74zM1529 137v79h1v-79zM1530 137v79h1v-79zM1531 137v79h1v-79zM1532 137v68h1v-68zM1533 137v58h1v-58zM1534 137v52h1v-52zM1535 137v46h1v-46zM1536 137v34h1v-34zM1537 137v28h1v-28zM1538 137v20h1v-20zM1539 137v10h1v-10zM1540 136v1h1v-1zM1541 124v13h1v-13zM1542 113v24h1v-24zM1543 104v33h1v-33zM1544 94v43h1v-43zM1545 83v54h1v-54zM1546 78v59h1v-59zM1547 68v69h1v-69zM1548 64v73h1v-73zM1549 58v79h1v-79zM1550 56v81h1v-81zM1551 54v83h1v-83zM1552 57v80h1v-80zM1553 56v81h1v-81zM1554 59v78h1v-78zM1555 67v70h1v-70zM1556 74v63h1v-63zM1557 79v58h1v-58zM1558 88v49h1v-49zM1559 99v38h1v-38zM1560 110v27h1v-27zM1561 123v14h1v-14zM1562 135v2h1v-2zM1563 137v6h1v-6zM1564 137v12h1v-12zM1565 137v18h1v-18zM1566 137v24h1v-24zM1567 137v31h1v-31zM1568 137v37h1v-37zM1569 137v42h1v-42zM1570 137v49h1v-49zM1571 137v55h1v-55zM1572 137v62h1v-62zM1573 137v68h1v-68zM1574 137v74h1v-74zM1575 137v80h1v-80zM1576 137v85h1v-85zM1577 137v85h1v-85zM1578 137v82h1v-82zM1579 137v72h1v-72zM1580 137v61h1v-61zM1581 137v52h1v-52zM1582 137v40h1v-40zM1583 137v28h1v-28zM1584 137v16h1v-16zM1585 137v3h1v-3zM1586 128v9h1v-9z"/>
 <path fill="#fff" d="M41 407v1h1v-1zM42 407v1h1v-1zM44 407v1h1v-1zM45 407v1h1v-1zM47 407v1h1v-1zM48 406v2h1v-2zM49 406v2h1v-2zM50 406v2h1v-2zM51 406v2h1v-2zM52 406v2h1v-2zM53 405v3h1v-3zM54 407v1h1v-1zM55 406v2h1v-2zM56 405v3h1v-3zM57 407v1h1v-1zM58 406v2h1v-2zM59 407v1h1v-1zM60 407v1h1v-1zM61 407v1h1v-1zM62 407v1h1v-1zM65 407v1h1v-1zM67 408v2h1v-2zM69 408v2h1v-2zM70 408v2h1v-2zM72 408v3h1v-3zM73 408v2h1v-2zM75 408v3h1v-3zM76 408v3h1v-3zM77 408v3h1v-3zM78 408v2h1v-2zM79 408v4h1v-4zM80 408v3h1v-3zM81 408v3h1v-3zM82 408v5h1v-5zM83 408v2h1v-2zM84 408v2h1v-2zM85 408v3h1v-3zM86 408v2h1v-2zM90 407v1h1v-1zM92 406v2h1v-2zM93 406v2h1v-2zM94 405v3h1v-3zM95 406v2h1v-2zM96 404v4h1v-4zM97 404v4h1v-4zM98 403v5h1v-5zM99 405v3h1v-3zM100 406v2h1v-2zM101 403v5h1v-5zM102 405v3h1v-3zM103 404v4h1v-4zM104 406v2h1v-2zM105 406v2h1v-2zM106 406v2h1v-2zM107 406v2h1v-2zM108 406v2h1v-2zM109 407v1h1v-1zM115 408v2h1v-2zM117 408v2h1v-2zM119 408v3h1v-3zM120 408v2h1v-2zM121 408v3h1v-3zM122 408v3h1v-3zM123 408v2h1v-2zM124 408v3h1v-3zM125 408v2h1v-2zM126 408v4h1v-4zM127 408v3h1v-3zM128 408v2h1v-2zM129 408v3h1v-3zM131 408v2h1v-2zM134 407v1h1v-1zM135 407v1h1v-1zM136 407v1h1v-1zM137 407v1h1v-1zM138 406v2h1v-2zM139 407v1h1v-1zM140 405v3h1v-3zM141 405v3h1v-3zM142 404v4h1v-4zM143 405v3h1v-3zM144 406v2h1v-2zM145 404v4h1v-4zM146 407v1h1v-1zM147 406v2h1v-2zM148 407v1h1v-1zM149 407v1h1v-1zM150 408v2h1v-2zM151 407v1h1v-1zM160 408v2h1v-2zM161 408v2h1v-2zM165 408v2h1v-2zM167 408v2h1v-2zM169 408v2h1v-2zM174 408v2h1v-2zM178 407v1h1v-1zM181 407v1h1v-1zM182 406v2h1v-2zM183 407v1h1v-1zM184 406v2h1v-2zM185 407v1h1v-1zM186 406v2h1v-2zM187 405v3h1v-3zM188 405v3h1v-3zM189 406v2h1v-2zM190 406v2h1v-2zM191 404v4h1v-4zM192 406v2h1v-2zM193 405v3h1v-3zM194 406v2h1v-2zM195 406v2h1v-2zM200 407v1h1v-1zM201 408v2h1v-2zM202 408v2h1v-2zM203 408v2h1v-2zM204 407v1h1v-1zM205 408v3h1v-3zM206 408v3h1v-3zM207 408v2h1v-2zM208 408v3h1v-3zM209 408v3h1v-3zM210 408v2h1v-2zM211 408v3h1v-3zM212 408v2h1v-2zM213 408v2h1v-2zM214 408v3h1v-3zM215 408v2h1v-2zM216 408v2h1v-2zM220 407v1h1v-1zM222 407v1h1v-1zM223 406v2h1v-2zM224 407v1h1v-1zM225 407v1h1v-1zM226 406v2h1v-2zM228 407v1h1v-1zM229 407v1h1v-1zM230 407v1h1v-1zM231 405v3h1v-3zM232 406v2h1v-2zM233 406v2h1v-2zM234 407v1h1v-1zM235 406v2h1v-2zM236 406v2h1v-2zM237 407v1h1v-1zM239 406v2h1v-2zM240 408v2h1v-2zM246 408v2h1v-2zM248 408v2h1v-2zM250 408v3h1v-3zM252 408v2h1v-2zM253 408v2h1v-2zM255 408v3h1v-3zM256 408v2h1v-2zM259 408v2h1v-2zM260 408v2h1v-2zM261 408v2h1v-2zM268 407v1h1v-1zM269 408v2h1v-2zM270 406v2h1v-2zM272 406v2h1v-2zM273 407v1h1v-1zM274 406v2h1v-2zM275 405v3h1v-3zM276 406v2h1v-2zM277 406v2h1v-2zM278 406v2h1v-2zM279 408v2h1v-2zM280 406v2h1v-2zM285 407v1h1v-1zM288 408v2h1v-2zM290 408v2h1v-2zM291 408v2h1v-2zM292 408v3h1v-3zM293 408v2h1v-2zM294 408v2h1v-2zM295 408v2h1v-2zM297 408v2h1v-2zM298 408v2h1v-2zM299 408v2h1v-2zM300 408v2h1v-2zM302 408v2h1v-2zM303 408v2h1v-2zM309 408v2h1v-2zM312 406v2h1v-2zM313 407v1h1v-1zM314 406v2h1v-2zM315 407v1h1v-1zM316 406v2h1v-2zM317 407v1h1v-1zM318 405v3h1v-3zM320 406v2h1v-2zM321 406v2h1v-2zM322 407v1h1v-1zM323 407v1h1v-1zM324 407v1h1v-1zM329 408v2h1v-2zM330 408v2h1v-2zM332 408v2h1v-2zM333 408v2h1v-2zM334 408v2h1v-2zM335 408v2h1v-2zM336 408v3h1v-3zM337 408v4h1v-4zM338 408v2h1v-2zM339 408v2h1v-2zM340 408v2h1v-2zM342 408v2h1v-2zM348 407v1h1v-1zM353 406v2h1v-2zM354 407v1h1v-1zM355 406v2h1v-2zM357 407v1h1v-1zM358 407v1h1v-1zM359 407v1h1v-1zM361 407v1h1v-1zM362 407v1h1v-1zM373 408v2h1v-2zM374 408v2h1v-2zM375 408v2h1v-2zM376 408v2h1v-2zM377 408v2h1v-2zM378 408v2h1v-2zM382 408v2h1v-2zM393 407v1h1v-1zM396 407v1h1v-1zM398 408v2h1v-2zM399 407v1h1v-1zM401 407v1h1v-1zM402 406v2h1v-2zM403 406v2h1v-2zM405 406v2h1v-2zM406 407v1h1v-1zM407 407v1h1v-1zM408 407v1h1v-1zM409 407v1h1v-1zM410 407v1h1v-1zM411 407v1h1v-1zM414 408v2h1v-2zM415 408v2h1v-2zM418 408v2h1v-2zM419 408v3h1v-3zM420 408v2h1v-2zM421 408v3h1v-3zM422 408v3h1v-3zM423 408v3h1v-3zM424 408v3h1v-3zM425 408v4h1v-4zM426 408v3h1v-3zM427 408v3h1v-3zM428 408v3h1v-3zM429 408v2h1v-2zM430 408v4h1v-4zM431 408v2h1v-2zM432 408v2h1v-2zM433 408v2h1v-2zM436 406v2h1v-2zM437 407v1h1v-1zM438 405v3h1v-3zM439 405v3h1v-3zM440 404v4h1v-4zM441 405v3h1v-3zM442 405v3h1v-3zM443 405v3h1v-3zM444 406v2h1v-2zM445 406v2h1v-2zM446 405v3h1v-3zM447 407v1h1v-1zM448 406v2h1v-2zM449 406v2h1v-2zM450 406v2h1v-2zM457 408v2h1v-2zM458 408v2h1v-2zM459 407v1h1v-1zM461 408v2h1v-2zM462 408v2h1v-2zM463 408v3h1v-3zM464 408v2h1v-2zM465 408v2h1v-2zM466 408v2h1v-2zM467 408v2h1v-2zM468 408v3h1v-3zM470 408v2h1v-2zM471 408v3h1v-3zM473 407v1h1v-1zM474 407v1h1v-1zM476 407v1h1v-1zM477 407v1h1v-1zM478 406v2h1v-2zM479 406v2h1v-2zM480 404v4h1v-4zM481 404v4h1v-4zM482 405v3h1v-3zM483 404v4h1v-4zM484 405v3h1v-3zM485 406v2h1v-2zM486 405v3h1v-3zM487 406v2h1v-2zM488 406v2h1v-2zM489 406v2h1v-2zM490 406v2h1v-2zM491 407v1h1v-1zM492 407v1h1v-1zM501 408v2h1v-2zM503 408v2h1v-2zM504 408v2h1v-2zM505 408v3h1v-3zM507 408v3h1v-3zM508 408v3h1v-3zM509 408v3h1v-3zM510 408v2h1v-2zM512 408v2h1v-2zM515 407v1h1v-1zM518 406v2h1v-2zM519 406v2h1v-2zM520 404v4h1v-4zM521 403v5h1v-5zM522 404v4h1v-4zM523 404v4h1v-4zM524 404v4h1v-4zM525 407v1h1v-1zM526 405v3h1v-3zM527 407v1h1v-1zM528 407v1h1v-1zM529 407v1h1v-1zM530 407v1h1v-1zM533 407v1h1v-1zM536 408v2h1v-2zM537 408v2h1v-2zM538 408v2h1v-2zM539 408v2h1v-2zM540 408v2h1v-2zM542 408v3h1v-3zM543 408v2h1v-2zM544 408v2h1v-2zM545 408v2h1v-2zM546 408v3h1v-3zM549 407v1h1v-1zM550 407v1h1v-1zM553 408v2h1v-2zM554 407v1h1v-1zM555 407v1h1v-1zM556 407v1h1v-1zM557 407v1h1v-1zM559 407v1h1v-1zM560 407v1h1v-1zM565 406v2h1v-2zM566 407v1h1v-1zM567 407v1h1v-1zM569 407v1h1v-1zM573 408v2h1v-2zM574 408v2h1v-2zM576 408v2h1v-2zM577 408v3h1v-3zM578 408v3h1v-3zM580 408v3h1v-3zM581 408v4h1v-4zM582 408v4h1v-4zM583 408v3h1v-3zM584 408v4h1v-4zM585 408v3h1v-3zM586 408v2h1v-2zM587 408v3h1v-3zM588 408v2h1v-2zM589 408v3h1v-3zM590 408v3h1v-3zM592 408v2h1v-2zM593 407v1h1v-1zM594 407v1h1v-1zM596 407v1h1v-1zM597 406v2h1v-2zM598 406v2h1v-2zM599 407v1h1v-1zM600 407v1h1v-1zM601 407v1h1v-1zM602 406v2h1v-2zM603 407v1h1v-1zM604 406v2h1v-2zM606 407v1h1v-1zM608 406v2h1v-2zM609 406v2h1v-2zM611 407v1h1v-1zM614 407v1h1v-1zM615 408v2h1v-2zM617 408v2h1v-2zM619 408v2h1v-2zM620 408v2h1v-2zM621 407v1h1v-1zM622 408v3h1v-3zM623 408v3h1v-3zM624 408v2h1v-2zM625 408v3h1v-3zM626 408v3h1v-3zM627 408v3h1v-3zM628 408v3h1v-3zM630 408v2h1v-2zM631 408v3h1v-3zM635 407v1h1v-1zM636 407v1h1v-1zM637 406v2h1v-2zM638 406v2h1v-2zM639 404v4h1v-4zM640 406v2h1v-2zM641 404v4h1v-4zM642 406v2h1v-2zM643 404v4h1v-4zM644 404v4h1v-4zM645 406v2h1v-2zM646 405v3h1v-3zM647 404v4h1v-4zM648 404v4h1v-4zM649 403v5h1v-5zM650 406v2h1v-2zM651 406v2h1v-2zM652 406v2h1v-2zM653 406v2h1v-2zM654 407v1h1v-1zM656 407v1h1v-1zM658 408v2h1v-2zM659 408v2h1v-2zM660 408v3h1v-3zM661 408v3h1v-3zM662 408v2h1v-2zM663 408v4h1v-4zM664 408v4h1v-4zM665 408v4h1v-4zM666 408v5h1v-5zM667 408v6h1v-6zM668 408v4h1v-4zM669 408v4h1v-4zM670 408v5h1v-5zM671 408v2h1v-2zM672 408v3h1v-3zM674 408v2h1v-2zM676 407v1h1v-1zM678 406v2h1v-2zM679 406v2h1v-2zM680 406v2h1v-2zM681 405v3h1v-3zM682 405v3h1v-3zM683 405v3h1v-3zM684 405v3h1v-3zM685 405v3h1v-3zM686 404v4h1v-4zM687 406v2h1v-2zM688 406v2h1v-2zM689 406v2h1v-2zM690 405v3h1v-3zM691 406v2h1v-2zM692 406v2h1v-2zM693 407v1h1v-1zM699 408v2h1v-2zM700 408v4h1v-4zM701 408v3h1v-3zM702 408v4h1v-4zM703 408v4h1v-4zM704 408v4h1v-4zM705 408v3h1v-3zM706 408v3h1v-3zM707 408v4h1v-4zM708 408v5h1v-5zM709 408v4h1v-4zM710 408v4h1v-4zM711 408v3h1v-3zM712 408v3h1v-3zM716 406v2h1v-2zM717 407v1h1v-1zM718 405v3h1v-3zM719 405v3h1v-3zM720 406v2h1v-2zM721 403v5h1v-5zM722 404v4h1v-4zM723 405v3h1v-3zM724 404v4h1v-4zM725 405v3h1v-3zM726 405v3h1v-3zM727 403v5h1v-5zM728 406v2h1v-2zM729 405v3h1v-3zM730 404v4h1v-4zM731 406v2h1v-2zM733 407v1h1v-1zM734 407v1h1v-1zM738 408v3h1v-3zM739 408v3h1v-3zM740 408v3h1v-3zM741 408v2h1v-2zM742 408v4h1v-4zM743 408v3h1v-3zM744 408v3h1v-3zM745 408v2h1v-2zM746 408v5h1v-5zM747 408v3h1v-3zM748 408v4h1v-4zM749 408v4h1v-4zM750 408v2h1v-2zM752 408v3h1v-3zM758 407v1h1v-1zM759 406v2h1v-2zM761 407v1h1v-1zM762 405v3h1v-3zM763 405v3h1v-3zM764 404v4h1v-4zM765 405v3h1v-3zM766 406v2h1v-2zM767 405v3h1v-3zM768 406v2h1v-2zM769 407v1h1v-1zM770 405v3h1v-3zM771 406v2h1v-2zM772 407v1h1v-1zM773 407v1h1v-1zM774 406v2h1v-2zM777 408v2h1v-2zM780 408v3h1v-3zM781 408v3h1v-3zM782 408v3h1v-3zM783 408v2h1v-2zM784 408v4h1v-4zM785 408v5h1v-5zM786 408v4h1v-4zM787 408v3h1v-3zM788 408v5h1v-5zM789 408v4h1v-4zM790 408v3h1v-3zM791 408v4h1v-4zM792 408v2h1v-2zM793 408v3h1v-3zM794 408v3h1v-3zM795 408v2h1v-2zM797 407v1h1v-1zM798 407v1h1v-1zM799 407v1h1v-1zM800 407v1h1v-1zM801 405v3h1v-3zM802 405v3h1v-3zM803 405v3h1v-3zM804 403v5h1v-5zM805 405v3h1v-3zM806 403v5h1v-5zM807 404v4h1v-4zM808 401v7h1v-7zM809 402v6h1v-6zM810 404v4h1v-4zM811 405v3h1v-3zM812 406v2h1v-2zM813 405v3h1v-3zM814 406v2h1v-2zM816 408v2h1v-2zM817 408v2h1v-2zM819 408v3h1v-3zM820 408v4h1v-4zM821 408v3h1v-3zM822 408v5h1v-5zM823 408v3h1v-3zM824 408v5h1v-5zM825 408v4h1v-4zM826 408v4h1v-4zM827 408v5h1v-5zM828 408v4h1v-4zM829 408v4h1v-4zM830 408v6h1v-6zM831 408v6h1v-6zM832 408v3h1v-3zM833 408v5h1v-5zM834 408v4h1v-4zM835 408v3h1v-3zM839 406v2h1v-2zM840 407v1h1v-1zM841 405v3h1v-3zM842 404v4h1v-4zM843 405v3h1v-3zM844 403v5h1v-5zM845 403v5h1v-5zM846 404v4h1v-4zM847 402v6h1v-6zM848 403v5h1v-5zM849 402v6h1v-6zM850 403v5h1v-5zM851 403v5h1v-5zM852 406v2h1v-2zM853 405v3h1v-3zM854 407v1h1v-1zM855 406v2h1v-2zM856 407v1h1v-1zM860 407v1h1v-1zM862 408v2h1v-2zM863 408v2h1v-2zM866 408v3h1v-3zM867 408v4h1v-4zM868 408v2h1v-2zM869 408v3h1v-3zM870 408v3h1v-3zM871 408v4h1v-4zM872 408v4h1v-4zM873 408v2h1v-2zM874 408v2h1v-2zM876 407v1h1v-1zM881 406v2h1v-2zM882 406v2h1v-2zM883 406v2h1v-2zM884 407v1h1v-1zM885 404v4h1v-4zM886 404v4h1v-4zM887 405v3h1v-3zM888 404v4h1v-4zM889 405v3h1v-3zM890 404v4h1v-4zM891 404v4h1v-4zM892 405v3h1v-3zM893 407v1h1v-1zM894 405v3h1v-3zM895 405v3h1v-3zM902 408v2h1v-2zM903 407v1h1v-1zM904 408v3h1v-3zM905 408v3h1v-3zM908 408v3h1v-3zM909 408v4h1v-4zM910 408v3h1v-3zM911 408v2h1v-2zM912 408v3h1v-3zM913 408v3h1v-3zM914 408v3h1v-3zM915 408v2h1v-2zM916 407v1h1v-1zM917 407v1h1v-1zM920 407v1h1v-1zM921 407v1h1v-1zM923 406v2h1v-2zM924 407v1h1v-1zM925 407v1h1v-1zM926 406v2h1v-2zM927 406v2h1v-2zM928 407v1h1v-1zM929 407v1h1v-1zM931 406v2h1v-2zM933 407v1h1v-1zM934 406v2h1v-2zM935 407v1h1v-1zM936 407v1h1v-1zM939 408v2h1v-2zM945 408v2h1v-2zM947 408v2h1v-2zM948 408v3h1v-3zM949 408v2h1v-2zM950 408v3h1v-3zM951 408v4h1v-4zM952 408v2h1v-2zM953 408v3h1v-3zM954 408v3h1v-3zM956 408v2h1v-2zM959 407v1h1v-1zM961 407v1h1v-1zM963 407v1h1v-1zM964 406v2h1v-2zM965 406v2h1v-2zM966 404v4h1v-4zM967 405v3h1v-3zM968 404v4h1v-4zM969 404v4h1v-4zM970 404v4h1v-4zM971 406v2h1v-2zM972 405v3h1v-3zM973 405v3h1v-3zM974 406v2h1v-2zM975 405v3h1v-3zM976 406v2h1v-2zM977 405v3h1v-3zM978 406v2h1v-2zM980 408v2h1v-2zM982 407v1h1v-1zM983 408v2h1v-2zM984 408v2h1v-2zM986 408v3h1v-3zM987 408v3h1v-3zM988 408v2h1v-2zM989 408v3h1v-3zM990 408v3h1v-3zM991 408v3h1v-3zM992 408v3h1v-3zM993 408v4h1v-4zM994 408v3h1v-3zM995 408v4h1v-4zM996 408v2h1v-2zM998 408v2h1v-2zM1003 407v1h1v-1zM1005 407v1h1v-1zM1006 407v1h1v-1zM1007 406v2h1v-2zM1008 407v1h1v-1zM1009 405v3h1v-3zM1010 406v2h1v-2zM1011 405v3h1v-3zM1012 404v4h1v-4zM1013 404v4h1v-4zM1014 403v5h1v-5zM1015 403v5h1v-5zM1016 404v4h1v-4zM1017 403v5h1v-5zM1018 406v2h1v-2zM1019 405v3h1v-3zM1020 406v2h1v-2zM1021 407v1h1v-1zM1022 408v2h1v-2zM1025 408v2h1v-2zM1026 408v2h1v-2zM1027 408v3h1v-3zM1028 408v4h1v-4zM1029 408v2h1v-2zM1030 408v3h1v-3zM1031 408v4h1v-4zM1032 408v5h1v-5zM1033 408v3h1v-3zM1034 408v6h1v-6zM1035 408v4h1v-4zM1036 408v4h1v-4zM1037 408v4h1v-4zM1038 408v4h1v-4zM1040 408v3h1v-3zM1041 408v2h1v-2zM1042 408v2h1v-2zM1044 407v1h1v-1zM1045 407v1h1v-1zM1046 407v1h1v-1zM1047 407v1h1v-1zM1048 406v2h1v-2zM1049 406v2h1v-2zM1050 404v4h1v-4zM1051 406v2h1v-2zM1052 405v3h1v-3zM1053 405v3h1v-3zM1054 404v4h1v-4zM1055 406v2h1v-2zM1056 405v3h1v-3zM1057 403v5h1v-5zM1058 404v4h1v-4zM1059 406v2h1v-2zM1060 406v2h1v-2zM1061 407v1h1v-1zM1062 407v1h1v-1zM1063 408v2h1v-2zM1064 407v1h1v-1zM1065 407v1h1v-1zM1066 408v2h1v-2zM1068 408v2h1v-2zM1069 408v3h1v-3zM1070 408v3h1v-3zM1071 408v4h1v-4zM1072 408v3h1v-3zM1073 408v4h1v-4zM1074 408v6h1v-6zM1075 408v6h1v-6zM1076 408v4h1v-4zM1077 408v4h1v-4zM1078 408v5h1v-5zM1079 408v5h1v-5zM1080 408v4h1v-4zM1081 408v5h1v-5zM1082 408v5h1v-5zM1083 408v4h1v-4zM1084 408v4h1v-4zM1085 408v3h1v-3zM1086 408v2h1v-2zM1089 406v2h1v-2zM1090 404v4h1v-4zM1091 404v4h1v-4zM1092 402v6h1v-6zM1093 402v6h1v-6zM1094 403v5h1v-5zM1095 404v4h1v-4zM1096 403v5h1v-5zM1097 403v5h1v-5zM1098 402v6h1v-6zM1099 401v7h1v-7zM1100 402v6h1v-6zM1101 405v3h1v-3zM1102 405v3h1v-3zM1103 406v2h1v-2zM1104 405v3h1v-3zM1105 406v2h1v-2zM1110 408v2h1v-2zM1112 408v2h1v-2zM1113 408v2h1v-2zM1114 408v2h1v-2zM1115 408v3h1v-3zM1116 408v2h1v-2zM1117 408v3h1v-3zM1118 408v3h1v-3zM1119 408v5h1v-5zM1120 408v5h1v-5zM1121 408v4h1v-4zM1122 408v4h1v-4zM1123 408v5h1v-5zM1124 408v3h1v-3zM1125 408v4h1v-4zM1126 408v3h1v-3zM1127 408v2h1v-2zM1132 407v1h1v-1zM1133 406v2h1v-2zM1134 407v1h1v-1zM1135 405v3h1v-3zM1136 404v4h1v-4zM1137 405v3h1v-3zM1138 405v3h1v-3zM1139 402v6h1v-6zM1140 405v3h1v-3zM1141 403v5h1v-5zM1142 404v4h1v-4zM1143 405v3h1v-3zM1144 404v4h1v-4zM1145 405v3h1v-3zM1146 405v3h1v-3zM1147 403v5h1v-5zM1148 407v1h1v-1zM1149 407v1h1v-1zM1150 407v1h1v-1zM1154 408v3h1v-3zM1155 408v3h1v-3zM1156 408v3h1v-3zM1157 408v4h1v-4zM1158 408v3h1v-3zM1159 408v4h1v-4zM1160 408v5h1v-5zM1161 408v5h1v-5zM1162 408v4h1v-4zM1163 408v4h1v-4zM1164 408v4h1v-4zM1165 408v6h1v-6zM1166 408v4h1v-4zM1167 408v3h1v-3zM1168 408v3h1v-3zM1171 407v1h1v-1zM1172 407v1h1v-1zM1173 407v1h1v-1zM1174 406v2h1v-2zM1175 406v2h1v-2zM1176 406v2h1v-2zM1177 406v2h1v-2zM1178 407v1h1v-1zM1179 405v3h1v-3zM1180 406v2h1v-2zM1181 406v2h1v-2zM1182 405v3h1v-3zM1183 406v2h1v-2zM1184 404v4h1v-4zM1185 405v3h1v-3zM1186 405v3h1v-3zM1187 405v3h1v-3zM1188 406v2h1v-2zM1189 407v1h1v-1zM1190 406v2h1v-2zM1194 408v3h1v-3zM1195 408v2h1v-2zM1196 408v4h1v-4zM1197 408v3h1v-3zM1198 408v3h1v-3zM1199 408v6h1v-6zM1200 408v7h1v-7zM1201 408v8h1v-8zM1202 408v5h1v-5zM1203 408v5h1v-5zM1204 408v7h1v-7zM1205 408v8h1v-8zM1206 408v7h1v-7zM1207 408v6h1v-6zM1208 408v3h1v-3zM1209 408v3h1v-3zM1213 407v1h1v-1zM1214 407v1h1v-1zM1215 406v2h1v-2zM1216 406v2h1v-2zM1217 407v1h1v-1zM1218 405v3h1v-3zM1219 407v1h1v-1zM1220 406v2h1v-2zM1221 407v1h1v-1zM1222 405v3h1v-3zM1223 406v2h1v-2zM1224 405v3h1v-3zM1225 406v2h1v-2zM1226 407v1h1v-1zM1227 406v2h1v-2zM1228 405v3h1v-3zM1229 407v1h1v-1zM1230 407v1h1v-1zM1234 407v1h1v-1zM1237 408v2h1v-2zM1238 408v2h1v-2zM1239 408v4h1v-4zM1240 408v3h1v-3zM1241 408v3h1v-3zM1242 408v6h1v-6zM1243 408v5h1v-5zM1244 408v6h1v-6zM1245 408v4h1v-4zM1246 408v7h1v-7zM1247 408v7h1v-7zM1248 408v7h1v-7zM1249 408v5h1v-5zM1250 408v4h1v-4zM1251 408v4h1v-4zM1252 408v4h1v-4zM1256 406v2h1v-2zM1257 406v2h1v-2zM1258 403v5h1v-5zM1259 402v6h1v-6zM1260 403v5h1v-5zM1261 399v9h1v-9zM1262 400v8h1v-8zM1263 403v5h1v-5zM1264 402v6h1v-6zM1265 400v8h1v-8zM1266 405v3h1v-3zM1267 404v4h1v-4zM1268 403v5h1v-5zM1269 403v5h1v-5zM1270 407v1h1v-1zM1271 406v2h1v-2zM1272 407v1h1v-1zM1274 407v1h1v-1zM1278 408v2h1v-2zM1279 408v2h1v-2zM1280 408v2h1v-2zM1283 408v3h1v-3zM1284 408v3h1v-3zM1285 408v3h1v-3zM1286 408v4h1v-4zM1287 408v2h1v-2zM1288 408v4h1v-4zM1289 408v5h1v-5zM1290 408v5h1v-5zM1291 408v2h1v-2zM1292 408v3h1v-3zM1293 408v3h1v-3zM1295 407v1h1v-1zM1297 406v2h1v-2zM1298 404v4h1v-4zM1299 406v2h1v-2zM1300 404v4h1v-4zM1301 402v6h1v-6zM1302 401v7h1v-7zM1303 403v5h1v-5zM1304 404v4h1v-4zM1305 401v7h1v-7zM1306 401v7h1v-7zM1307 403v5h1v-5zM1308 403v5h1v-5zM1309 403v5h1v-5zM1310 405v3h1v-3zM1311 406v2h1v-2zM1312 406v2h1v-2zM1316 407v1h1v-1zM1317 408v2h1v-2zM1318 408v2h1v-2zM1319 407v1h1v-1zM1320 408v2h1v-2zM1321 408v2h1v-2zM1322 408v3h1v-3zM1323 408v2h1v-2zM1324 408v2h1v-2zM1325 408v4h1v-4zM1326 408v4h1v-4zM1327 408v4h1v-4zM1328 408v5h1v-5zM1329 408v3h1v-3zM1330 408v5h1v-5zM1331 408v4h1v-4zM1332 408v2h1v-2zM1334 408v2h1v-2zM1335 408v2h1v-2zM1336 407v1h1v-1zM1337 406v2h1v-2zM1338 406v2h1v-2zM1339 404v4h1v-4zM1340 405v3h1v-3zM1341 405v3h1v-3zM1342 405v3h1v-3zM1343 405v3h1v-3zM1344 405v3h1v-3zM1345 402v6h1v-6zM1346 402v6h1v-6zM1347 405v3h1v-3zM1348 405v3h1v-3zM1349 405v3h1v-3zM1350 404v4h1v-4zM1351 406v2h1v-2zM1352 407v1h1v-1zM1353 406v2h1v-2zM1354 407v1h1v-1zM1362 407v1h1v-1zM1365 408v3h1v-3zM1367 408v2h1v-2zM1368 408v2h1v-2zM1369 408v2h1v-2zM1370 408v2h1v-2zM1371 407v1h1v-1zM1372 408v2h1v-2zM1375 407v1h1v-1zM1376 408v2h1v-2zM1377 407v1h1v-1zM1379 407v1h1v-1zM1380 407v1h1v-1zM1381 406v2h1v-2zM1382 407v1h1v-1zM1383 407v1h1v-1zM1384 406v2h1v-2zM1385 407v1h1v-1zM1387 406v2h1v-2zM1388 406v2h1v-2zM1389 406v2h1v-2zM1390 407v1h1v-1zM1391 406v2h1v-2zM1392 406v2h1v-2zM1396 407v1h1v-1zM1399 408v2h1v-2zM1402 408v2h1v-2zM1403 408v2h1v-2zM1404 408v4h1v-4zM1405 408v4h1v-4zM1406 408v3h1v-3zM1407 408v4h1v-4zM1408 408v6h1v-6zM1409 408v4h1v-4zM1410 408v4h1v-4zM1411 408v4h1v-4zM1412 408v5h1v-5zM1413 408v5h1v-5zM1414 408v3h1v-3zM1415 408v3h1v-3zM1418 407v1h1v-1zM1419 405v3h1v-3zM1420 404v4h1v-4zM1421 401v7h1v-7zM1422 403v5h1v-5zM1423 400v8h1v-8zM1424 401v7h1v-7zM1425 401v7h1v-7zM1426 402v6h1v-6zM1427 403v5h1v-5zM1428 402v6h1v-6zM1429 402v6h1v-6zM1430 401v7h1v-7zM1431 404v4h1v-4zM1432 405v3h1v-3zM1433 405v3h1v-3zM1434 406v2h1v-2zM1435 407v1h1v-1zM1440 408v2h1v-2zM1442 407v1h1v-1zM1444 408v2h1v-2zM1445 408v2h1v-2zM1446 408v2h1v-2zM1447 408v4h1v-4zM1448 408v3h1v-3zM1449 408v4h1v-4zM1450 408v3h1v-3zM1451 408v5h1v-5zM1452 408v4h1v-4zM1453 408v4h1v-4zM1454 408v3h1v-3zM1455 408v4h1v-4zM1456 408v4h1v-4zM1457 408v4h1v-4zM1458 408v2h1v-2zM1459 408v2h1v-2zM1460 407v1h1v-1zM1461 407v1h1v-1zM1462 406v2h1v-2zM1463 403v5h1v-5zM1464 404v4h1v-4zM1465 402v6h1v-6zM1466 403v5h1v-5zM1467 403v5h1v-5zM1468 402v6h1v-6zM1469 398v10h1v-10zM1470 403v5h1v-5zM1471 398v10h1v-10zM1472 399v9h1v-9zM1473 400v8h1v-8zM1474 403v5h1v-5zM1475 401v7h1v-7zM1476 401v7h1v-7zM1477 404v4h1v-4zM1478 406v2h1v-2zM1479 406v2h1v-2zM1480 406v2h1v-2zM1482 408v2h1v-2zM1483 408v2h1v-2zM1484 408v4h1v-4zM1485 408v4h1v-4zM1486 408v4h1v-4zM1487 408v5h1v-5zM1488 408v5h1v-5zM1489 408v7h1v-7zM1490 408v6h1v-6zM1491 408v6h1v-6zM1492 408v8h1v-8zM1493 408v7h1v-7zM1494 408v7h1v-7zM1495 408v5h1v-5zM1496 408v5h1v-5zM1497 408v4h1v-4zM1498 408v4h1v-4zM1499 408v2h1v-2zM1500 408v3h1v-3zM1501 408v2h1v-2zM1502 407v1h1v-1zM1503 406v2h1v-2zM1504 407v1h1v-1zM1505 403v5h1v-5zM1506 403v5h1v-5zM1507 402v6h1v-6zM1508 402v6h1v-6zM1509 403v5h1v-5zM1510 404v4h1v-4zM1511 401v7h1v-7zM1512 402v6h1v-6zM1513 403v5h1v-5zM1514 404v4h1v-4zM1515 404v4h1v-4zM1516 403v5h1v-5zM1517 405v3h1v-3zM1518 406v2h1v-2zM1519 405v3h1v-3zM1520 405v3h1v-3zM1522 407v1h1v-1zM1526 408v2h1v-2zM1527 408v2h1v-2zM1528 408v2h1v-2zM1530 408v2h1v-2zM1531 408v4h1v-4zM1532 408v4h1v-4zM1533 408v5h1v-5zM1534 408v4h1v-4zM1535 408v2h1v-2zM1536 408v4h1v-4zM1537 408v3h1v-3zM1538 408v2h1v-2zM1539 408v2h1v-2zM1540 408v3h1v-3zM1541 408v2h1v-2zM1542 408v3h1v-3zM1543 408v2h1v-2zM1548 406v2h1v-2zM1549 407v1h1v-1zM1550 405v3h1v-3zM1551 406v2h1v-2zM1552 403v5h1v-5zM1553 405v3h1v-3zM1554 402v6h1v-6zM1555 402v6h1v-6zM1556 402v6h1v-6zM1557 404v4h1v-4zM1558 401v7h1v-7zM1559 404v4h1v-4zM1560 402v6h1v-6zM1561 404v4h1v-4zM1562 404v4h1v-4zM1563 406v2h1v-2zM1564 405v3h1v-3zM1565 407v1h1v-1zM1566 406v2h1v-2zM1568 408v2h1v-2zM1569 408v2h1v-2zM1570 408v2h1v-2zM1571 408v3h1v-3zM1572 408v2h1v-2zM1573 408v4h1v-4zM1574 408v4h1v-4zM1575 408v3h1v-3zM1576 408v3h1v-3zM1577 408v4h1v-4zM1578 408v4h1v-4zM1579 408v5h1v-5zM1580 408v4h1v-4zM1581 408v5h1v-5zM1582 408v6h1v-6zM1583 408v6h1v-6zM1584 408v3h1v-3zM1585 408v4h1v-4zM1586 408v3h1v-3zM1587 408v3h1v-3zM1588 408v2h1v-2zM1589 408v2h1v-2zM1590 407v1h1v-1zM1595 407v1h1v-1z"/>
</svg>
<div class="abs mono lab bx" style="top:3px">+127</div>
<div class="abs mono lab bx" style="top:258px">-128</div>
<div class="abs mono lab bx" style="top:274px">+127</div>
<div class="abs mono lab bx" style="top:528px">-128</div>
<div class="abs mono lab" style="left:2.500px;top:128px;letter-spacing:0.6px">X<span class="cj">轴</span></div>
<div class="abs mono lab" style="left:2.500px;top:399px;letter-spacing:0.6px">Y<span class="cj">轴</span></div>
<div class="abs mono lab" style="left:203px;top:522px"><span class="cj" style="font-size:18.5px;letter-spacing:0.7px;position:relative;top:2px">总误差</span><span style="letter-spacing:-0.32px;margin-left:1px"> D=31.27</span></div>
<div class="abs" id="link" style="left:819px;top:526px;font-size:16px;line-height:18px;color:#4646ff;text-decoration:underline;white-space:nowrap;letter-spacing:0.72px">www.win2.cn</div>
</div>
<!-- right panel placeholder -->
<div class="abs" style="left:1508px;top:650px;width:88px;height:384px;background:#e0dfe3;border-top:1px solid #fff;border-left:1px solid #fff"></div>
<div class="abs" style="left:1596px;top:650px;width:3px;height:384px;background:#9d9da1"></div>
<div class="abs frame" style="left:1510px;top:657px;width:86px;height:298px"></div>
<div class="abs" style="left:1516px;top:651px;width:38px;height:14px;line-height:14px;background:#e0dfe3;font-size:12px;padding-left:1px">回报率</div>
<div class="abs" style="left:1517px;top:677px;width:12px;height:12px;background:#fff;border:1px solid #808080;border-right-color:#f4f2e8;border-bottom-color:#f4f2e8"></div>
<svg class="abs" style="left:1518px;top:678px" width="10" height="10" viewBox="0 0 10 10"><path d="M1.500 4.500L4 7L8.500 2" fill="none" stroke="#000" stroke-width="1.800"/></svg>
<div class="abs" style="left:1535px;top:675px;height:16px;line-height:16px;font-size:12px">显示</div>
<div class="abs" style="left:1517px;top:699px;width:72px;height:255px;background:#fff;border:1px solid #808080;border-right-color:#f4f2e8;border-bottom-color:#f4f2e8;box-shadow:inset 1px 1px 0 #55554f"></div>
<div class="abs" id="hzlist" style="left:1520px;top:703px;width:48px;font-size:12px;line-height:13px;white-space:nowrap;letter-spacing:-0.55px">124 hz<br>126 hz<br>126 hz<br>125 hz<br>125 hz<br>123 hz<br>123 hz<br>41 hz<br>41 hz<br>125 hz<br>125 hz<br>32 hz<br>32 hz<br>125 hz<br>125 hz<br>125 hz<br>125 hz<br>89 hz</div>
<div class="abs" style="left:1569px;top:701px;width:18px;height:252px;background:linear-gradient(to right,#e8e8f0,#fbfbfd 50%,#f4f4f8)"></div>
<div class="abs sbb" style="left:1570px;top:701px;width:17px;height:18px"></div>
<svg class="abs" style="left:1574px;top:706px" width="9" height="7"><path d="M1 5.500L4.500 2L8 5.500" fill="none" stroke="#3c3c50" stroke-width="2"/></svg>
<div class="abs sbb" style="left:1570px;top:901px;width:17px;height:33px"></div>
<div class="abs" style="left:1575px;top:913px;width:7px;height:1px;background:#9090a8;box-shadow:0 2px 0 #9090a8,0 4px 0 #9090a8,0 6px 0 #9090a8"></div>
<div class="abs sbb" style="left:1570px;top:935px;width:17px;height:18px"></div>
<svg class="abs" style="left:1574px;top:941px" width="9" height="7"><path d="M1 1.500L4.500 5L8 1.500" fill="none" stroke="#3c3c50" stroke-width="2"/></svg>
<div class="abs" style="left:1509px;top:955px;width:87px;height:79px;background:#e0dfe3"></div>
<div class="abs" style="left:1517px;top:960px;height:16px;line-height:16px;font-size:12px">平均</div>
<div class="abs" style="left:1517px;top:982px;height:16px;line-height:16px;font-size:12px">回报率</div>
<div class="abs" style="left:1517px;top:1004px;width:57px;height:20px;background:#fff;border:1px solid #808080;border-right-color:#f4f2e8;border-bottom-color:#f4f2e8;box-shadow:inset 1px 1px 0 #55554f;font-size:12px;line-height:17px;padding-left:3px;letter-spacing:-0.7px">89hz</div>

<!-- progress -->
<div class="abs" style="left:2px;top:1034px;width:1597px;height:1px;background:#a0a0a0"></div>
<div class="abs" style="left:1px;top:1035px;width:1598px;height:17px;background:#0000ff;border:1px solid #000;z-index:2"></div>
<div class="abs" style="left:0;top:1035px;width:1598px;height:16px;line-height:16px;text-align:center;color:#ffff00;font-size:12.5px;transform:scaleX(0.8);z-index:3">100%</div>
<!-- bottom -->
<div id="bottom" class="abs"></div>
<div class="abs" style="left:0;top:1052px;width:1601px;height:1px;background:#fff"></div>
<!-- logo -->
<div class="abs" style="left:10px;top:1058px;width:175px;height:76px;border:1px solid #9d9da1;box-shadow:1px 1px 0 #fff"></div>
<div class="abs" style="left:11px;top:1059px;width:173px;height:74px;border:1px solid #fff;background:#000"></div>
<svg class="abs" style="left:12px;top:1060px" width="172" height="72" viewBox="0 0 172 72">
 <defs><pattern id="hatch" width="3" height="3" patternUnits="userSpaceOnUse"><rect width="3" height="3" fill="#555"/><rect width="1" height="3" fill="#bbb"/><rect width="3" height="1" fill="#888"/></pattern></defs>
 <rect x="73" y="6" width="82" height="13" rx="2" fill="url(#hatch)"/>
 <text x="114" y="16.500" font-family="'Liberation Sans','Noto Sans CJK SC',sans-serif" font-weight="700" font-size="11.500" fill="#fff" text-anchor="middle" textLength="70" lengthAdjust="spacingAndGlyphs">长距无线专业</text>
 <g fill="none" stroke="#f0a020" stroke-width="1.600"><path d="M56.09 12.59A5.8 5.8 0 0 1 62.88 17.79"/><path d="M55.57 9.63A8.8 8.8 0 0 1 65.87 17.53"/><path d="M55.05 6.68A11.8 11.8 0 0 1 68.86 17.27"/></g>
 <rect x="56" y="20" width="2.400" height="8" fill="#fff"/><circle cx="57.100" cy="18.300" r="3.300" fill="#000" stroke="#fff" stroke-width="1.800"/>
 <text x="15.500" y="45.500" font-family="'Liberation Sans','Noto Sans CJK SC',sans-serif" font-weight="700" font-size="27" fill="#fff" textLength="73.500" lengthAdjust="spacingAndGlyphs">天遥</text>
 <text x="91" y="47.500" font-family="'Liberation Sans',sans-serif" font-weight="bold" font-style="italic" font-size="35" fill="#fff" textLength="60" lengthAdjust="spacingAndGlyphs" stroke="#fff" stroke-width="2">G7</text>
 <text x="16" y="63" font-family="'Liberation Sans','Noto Sans CJK TC','Noto Sans CJK SC',sans-serif" font-weight="900" font-size="13" fill="#f0a030" textLength="66" lengthAdjust="spacingAndGlyphs">4倍帶寬</text>
 <text x="87" y="63" font-family="'Liberation Sans','Noto Sans CJK TC','Noto Sans CJK SC',sans-serif" font-weight="900" font-size="13" fill="#fff" textLength="67" lengthAdjust="spacingAndGlyphs">達游戲級</text>
</svg>
<!-- score -->
<div class="abs frame" style="left:195px;top:1058px;width:167px;height:75px"></div>
<div class="abs song" style="left:202px;top:1059px;font-size:28px;line-height:34px;letter-spacing:3.6px;white-space:nowrap;font-weight:600">测试</div>
<div class="abs song" style="left:202px;top:1098px;font-size:28px;line-height:34px;letter-spacing:3.6px;white-space:nowrap;font-weight:600">分数</div>
<div class="abs" id="score" style="left:275px;top:1064px;font-family:'DejaVu Sans Mono','Liberation Mono',monospace;font-size:53px;line-height:66px;color:#ff0000;white-space:nowrap;transform-origin:0 0;transform:scaleX(0.80);letter-spacing:3.2px">94</div>
<!-- analysis -->
<div class="abs frame" style="left:368px;top:1058px;width:1224px;height:75px"></div>
<div class="abs song" style="left:376px;top:1059px;font-size:28px;line-height:34px;letter-spacing:1.5px;white-space:nowrap;font-weight:500">质量分析</div>
<div class="abs song" style="left:501px;top:1060px;font-size:16px;line-height:16px;white-space:nowrap">:</div>
<div class="abs song" style="left:501px;top:1076px;font-size:16px;line-height:16px;white-space:nowrap">:</div>
<div class="abs song" id="ana" style="left:512px;top:1061px;font-size:16px;line-height:16px;white-space:nowrap">恭喜您的鼠标为极高分鼠，计算出总误差量极小，鼠标移动平滑，无任何锯齿现象，光标线性极流畅，如是慢速移动得此极高分，请再改用极快速测试，<br>如仍是得此极高分，则您的鼠标是顶尖战斗鼠，将是玩家必寻必赢之宝贝！</div>
<div class="abs" style="left:417px;top:1097px;font-size:21px;line-height:26px;font-weight:bold;color:#ff0000;white-space:nowrap">A+</div>

<div class="abs" style="left:1599px;top:28px;width:1px;height:1006px;background:#98989e"></div>
<div class="abs" style="left:1598px;top:1034px;width:2px;height:102px;background:#98989e"></div>
<div class="abs" style="left:0;top:0;width:1px;height:28px;background:#606080"></div>
<div class="abs" style="left:1599px;top:0;width:2px;height:28px;background:#606080"></div>
<div class="abs" style="left:1600px;top:28px;width:1px;height:1108px;background:#fff"></div>
</body>
</html>
